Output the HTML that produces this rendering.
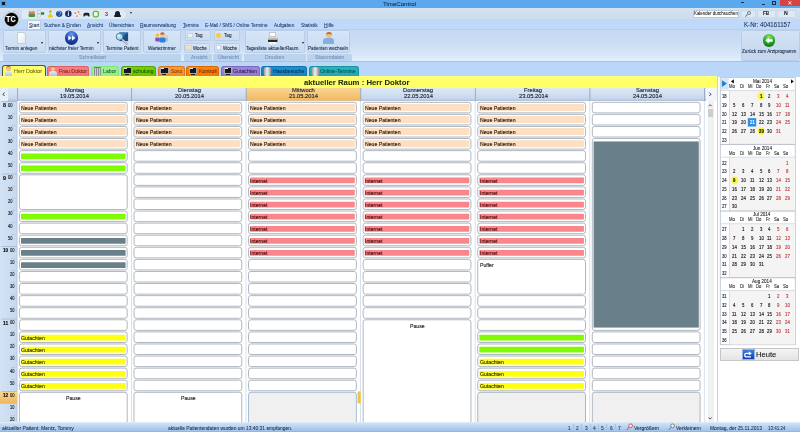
<!DOCTYPE html><html><head><meta charset="utf-8"><title>TimeControl</title><style>
*{box-sizing:border-box;margin:0;padding:0}
html,body{width:800px;height:432px;overflow:hidden;background:#fff}
body{font-family:"Liberation Sans",sans-serif;font-size:6px;color:#1a1a1a;position:relative}
#w{position:absolute;left:0;top:0;width:800px;height:432px;overflow:hidden;will-change:transform}
.a{position:absolute}
u{text-decoration-thickness:0.4px;text-underline-offset:0.2px;text-decoration-color:rgba(29,58,102,.6)}
.t{position:absolute;white-space:nowrap;line-height:1;-webkit-text-stroke:0.07px currentColor}
.g{-webkit-text-stroke:0.14px currentColor}
/* title */
#title{left:0;top:0;width:800px;height:8px;background:#5aa8ee}
/* ribbon */
#rib{left:0;top:8px;width:800px;height:69px;background:#bad7fa}
#ribtop{left:0;top:8px;width:800px;height:11px;background:linear-gradient(#d4e2f1,#cddded)}
.rb{position:absolute;background:linear-gradient(#d6e5f7,#c9dcf3);border:1px solid #bacde6;border-radius:1.5px}
.gl{position:absolute;height:7px;background:#bcd3ee;color:#6f8fb8;font-size:5.5px;text-align:center;line-height:7px;border-radius:1px}
.bt{position:absolute;font-size:5.2px;white-space:nowrap;text-align:center;color:#15253a;line-height:1}
.mt{position:absolute;top:21.5px;font-size:5.6px;color:#1d3a66;white-space:nowrap;line-height:1}
/* room tabs */
.rt{position:absolute;top:66px;height:10.5px;border-radius:3px 3px 0 0;font-size:5.6px;line-height:12px;white-space:nowrap;color:#1a2a1a;border:1px solid rgba(90,90,90,.35);border-bottom:none}
#banner{left:0;top:76px;width:717px;height:12px;background:linear-gradient(#ffff9c 0,#ffff68 14%,#ffff66)}
/* day header */
.dh{position:absolute;top:88px;height:14px;background:linear-gradient(#d9e6f5,#c3d6ec);border-right:1px solid #9fb3cc;text-align:center;font-size:6.2px;line-height:6px;color:#1a1a1a;padding-top:1px}
.dh.cur{background:linear-gradient(#f9d48c,#f3b95a)}
/* grid */
#timecol{left:0;top:102px;width:17px;height:319px;background:#c9dbef;border-right:1px solid #a9bfd9}
.c{position:absolute;background:#fff;border:1px solid #a7b2ba;border-radius:2.5px;padding:1px}
.c>i{display:block;width:100%;height:100%;border-radius:1px;font-style:normal;font-size:5.2px;line-height:8px;padding-left:1px;white-space:nowrap;overflow:hidden;color:#222}
.np>i{background:#fcdfc6}
.gr>i{background:#7ff20a}
.in>i{background:#f5838a;color:#5a1010}
.gy>i{background:#6a818b}
.gu>i{background:#ffff14;color:#3a3a00}
.ev{background:#f0f0f0}
.vl{position:absolute;top:102px;width:1px;height:319px;background:#d5dfea}
.hr{position:absolute;font-weight:bold;font-size:6px;color:#111;line-height:1}
.mn{position:absolute;font-size:4.6px;color:#333;line-height:1}
/* status */
#status{left:0;top:422px;width:800px;height:10px;background:linear-gradient(#e9f1fa 0,#d0e1f5 12%,#b2cef0 60%,#9fc2ec 92%,#7fa6d8 100%)}
.st{position:absolute;top:423.5px;font-size:5.4px;color:#1a2b44;white-space:nowrap;line-height:1}
/* right panel */
#rp{left:717px;top:77px;width:83px;height:345px;background:#fff;border-left:1px solid #c8d0d8}
.cal{position:absolute;font-size:5.6px;line-height:1;white-space:nowrap;text-align:center;color:#111}
.red{color:#c02a2a}
</style></head><body><div id="w">
<div class="a" id="title"></div>
<div class="t" style="left:383.00px;top:2.00px;font-size:5.80px;transform-origin:0 0;transform:scaleX(1.052);color:#16283e;">TimeControl</div>
<div class="a" style="left:1.2px;top:1.3px;width:4.6px;height:4.6px;border-radius:50%;background:radial-gradient(circle closest-side,#111 0,#111 55%,#93a0ae 78%,#4a5a6c 100%)"></div>
<div class="a" style="left:780px;top:0;width:20px;height:6px;background:#d8423f"></div>
<svg class="a" style="left:780px;top:0" width="20" height="6" viewBox="0 0 20 6"><path d="M8.4 1.3 L11.2 4.5 M11.2 1.3 L8.4 4.5" stroke="#fff" stroke-width="0.9"/></svg>
<div class="a" style="left:762px;top:3.6px;width:3px;height:1px;background:#1b2f4a"></div>
<div class="a" style="left:772.4px;top:1px;width:3.6px;height:3.6px;border:0.9px solid #1b2f4a"></div>
<div class="a" style="left:740.5px;top:2.2px;width:3.6px;height:1.1px;background:#1b2f4a"></div>
<div class="a" id="rib"></div>
<div class="a" id="ribtop"></div>
<div class="a" style="left:22px;top:9.5px;width:104px;height:9.5px;background:#deeaf8;border-radius:0 4.5px 4.5px 0"></div>
<svg class="a" style="left:26px;top:9px" width="76" height="10" viewBox="26 9 76 10"><rect x="28.6" y="13.4" width="6.4" height="3.6" rx="1" fill="#3f9c32"/><circle cx="30.3" cy="12.3" r="1.55" fill="#e8806e"/><circle cx="33.4" cy="12.3" r="1.55" fill="#e8806e"/><rect x="28.9" y="13.2" width="5.8" height="1.1" fill="#d9695a"/><rect x="37.2" y="10.8" width="3" height="2.6" fill="#e9eef4" stroke="#9fb0c2" stroke-width="0.5"/><rect x="41" y="12.3" width="3.2" height="2.4" fill="#2c7e3c"/><rect x="37.6" y="14.5" width="3" height="2.6" fill="#eef2f6" stroke="#a9b8c8" stroke-width="0.5"/><circle cx="50.4" cy="11.6" r="1.15" fill="#b89a10"/><path d="M50.3 12.4 L52.9 17.2 L47.6 17.2 Z" fill="#e8d022"/><rect x="48" y="15.6" width="4.8" height="1.6" rx="0.6" fill="#e8d022"/><circle cx="59.2" cy="13.8" r="3.15" fill="#1f4f92"/><path d="M57.4 12.2 q1.8 -1.6 3.4 0 q0.6 1.2 -1.4 2" stroke="#9fc4ea" stroke-width="0.9" fill="none"/><circle cx="59.3" cy="15.7" r="0.5" fill="#9fc4ea"/><circle cx="68.35" cy="13.8" r="3.25" fill="#102c72"/><rect x="67.85" y="13.2" width="1.1" height="2.6" fill="#fff"/><circle cx="68.4" cy="12" r="0.65" fill="#fff"/><circle cx="77.4" cy="13.8" r="2.2" fill="none" stroke="#fbf3ee" stroke-width="1.7"/><circle cx="77.4" cy="13.8" r="2.2" fill="none" stroke="#e8845e" stroke-width="1.7" stroke-dasharray="1.73 1.73" stroke-dashoffset="0.86"/><path d="M83.6 16.6 q-0.8 -3.6 1.4 -3.9 h3 q2.2 0.3 1.4 3.9 q-0.9 0.6 -1.6 -1 h-2.6 q-0.7 1.6 -1.6 1 Z" fill="#26262c"/><rect x="93.2" y="11.3" width="5.2" height="5.6" rx="1.8" fill="#eef7e6" stroke="#62b830" stroke-width="1.3"/></svg>
<div class="t" style="left:105.00px;top:11.00px;font-size:6.20px;transform-origin:0 0;transform:scaleX(0.870);font-weight:bold;color:#d41c1c;">3</div>
<div class="a" style="left:114.8px;top:10.6px;width:5.6px;height:5.4px;border-radius:2.8px 2.8px 0.5px 0.5px;background:#1c1c1c"></div>
<div class="a" style="left:114px;top:15.4px;width:7.2px;height:1.5px;background:#1c1c1c;border-radius:1px"></div>
<div class="a" style="left:129.6px;top:12.4px;width:0;height:0;border-left:1.3px solid transparent;border-right:1.3px solid transparent;border-top:2px solid #222"></div>
<div class="a" style="left:0;top:18.5px;width:800px;height:10.5px;background:#bed9fa"></div>
<div class="a" style="left:26.5px;top:19.5px;width:14px;height:10.5px;background:#f4f8fd;border:1px solid #b9cde6;border-bottom:none;border-radius:1.5px 1.5px 0 0"></div>
<div class="t" style="left:28.50px;top:23.00px;font-size:5.50px;transform-origin:0 0;transform:scaleX(0.904);color:#1d3a66;"><u>S</u>tart</div>
<div class="t" style="left:44.00px;top:23.00px;font-size:5.50px;transform-origin:0 0;transform:scaleX(0.877);color:#1d3a66;">Suchen &amp; <u>F</u>inden</div>
<div class="t" style="left:87.00px;top:23.00px;font-size:5.50px;transform-origin:0 0;transform:scaleX(0.887);color:#1d3a66;"><u>A</u>nsicht</div>
<div class="t" style="left:108.50px;top:23.00px;font-size:5.50px;transform-origin:0 0;transform:scaleX(0.852);color:#1d3a66;">&Uuml;bersichten</div>
<div class="t" style="left:140.00px;top:23.00px;font-size:5.50px;transform-origin:0 0;transform:scaleX(0.872);color:#1d3a66;"><u>R</u>aumverwaltung</div>
<div class="t" style="left:182.50px;top:23.00px;font-size:5.50px;transform-origin:0 0;transform:scaleX(0.818);color:#1d3a66;"><u>T</u>ermine</div>
<div class="t" style="left:205.00px;top:23.00px;font-size:5.50px;transform-origin:0 0;transform:scaleX(0.850);color:#1d3a66;">E-Mail / SMS / Online Termine</div>
<div class="t" style="left:274.30px;top:23.00px;font-size:5.50px;transform-origin:0 0;transform:scaleX(0.866);color:#1d3a66;">Aufgaben</div>
<div class="t" style="left:301.30px;top:23.00px;font-size:5.50px;transform-origin:0 0;transform:scaleX(0.857);color:#1d3a66;">Statistik</div>
<div class="t" style="left:324.00px;top:23.00px;font-size:5.50px;transform-origin:0 0;transform:scaleX(0.891);color:#1d3a66;"><u>H</u>ilfe</div>
<div class="a" style="left:0;top:28.5px;width:800px;height:33px;background:linear-gradient(#a9c2ea 0,#c5d9f3 3%,#cadcf4 40%,#d5e6f8 75%,#e1effc 95%,#e1effc 96.5%,#a3c2ea 98.5%)"></div>
<div class="rb" style="left:3.0px;top:30.0px;width:42.5px;height:22.5px"></div>
<div class="t" style="left:5.00px;top:46.00px;font-size:5.30px;transform-origin:0 0;transform:scaleX(0.897);color:#15253a;">Termin anlegen</div>
<div class="rb" style="left:48.0px;top:30.0px;width:53.0px;height:22.5px"></div>
<div class="t" style="left:49.00px;top:46.00px;font-size:5.30px;transform-origin:0 0;transform:scaleX(0.870);color:#15253a;">n&auml;chster freier Termin</div>
<div class="rb" style="left:103.0px;top:30.0px;width:38.0px;height:22.5px"></div>
<div class="t" style="left:105.50px;top:46.00px;font-size:5.30px;transform-origin:0 0;transform:scaleX(0.883);color:#15253a;">Termine Patient</div>
<div class="rb" style="left:143.0px;top:30.0px;width:37.5px;height:22.5px"></div>
<div class="t" style="left:147.70px;top:46.00px;font-size:5.30px;transform-origin:0 0;transform:scaleX(0.888);color:#15253a;">Wartezimmer</div>
<div class="gl" style="left:3.0px;top:53.8px;width:177.5px"></div><div class="t" style="left:79.00px;top:55.00px;font-size:5.40px;transform-origin:0 0;transform:scaleX(0.957);color:#6f8fb8;">Schnellstart</div>
<div class="a" style="left:17px;top:31.6px;width:9.4px;height:12.6px;background:linear-gradient(135deg,#fff,#e6eaf0);border:0.8px solid #c4ccd6;border-radius:0.5px 3px 0.5px 0.5px"></div>
<div class="a" style="left:65px;top:31.3px;width:13.4px;height:13.4px;border-radius:50%;background:radial-gradient(circle at 50% 25%,#6a9cf0,#1a3fa8 55%,#0a2070)"></div>
<svg class="a" style="left:67.6px;top:35.2px" width="8" height="6" viewBox="0 0 8 6"><path d="M0.3 0.4 L3.6 3 L0.3 5.6Z M4 0.4 L7.4 3 L4 5.6Z" fill="#fff"/></svg>
<svg class="a" style="left:112px;top:30px" width="60" height="16" viewBox="112 30 60 16"><rect x="119.5" y="32.5" width="8.6" height="8.6" fill="#1c4c84"/><path d="M119.5 32.5 h8.6 l-8.6 6Z" fill="#2f7fc0"/><path d="M122.2 39.4 L127.4 44.2" stroke="#7d8791" stroke-width="2"/><path d="M122.2 39.4 L127.4 44.2" stroke="#dfe3e8" stroke-width="1.1"/><circle cx="119.6" cy="36.7" r="3.4" fill="#a9dcf0" stroke="#3d6e94" stroke-width="0.9"/><circle cx="118.6" cy="35.7" r="1.3" fill="#e6f6fc"/><rect x="165.4" y="37.4" width="2.6" height="4.2" rx="0.8" fill="#9cc4ec"/><circle cx="166.6" cy="36" r="1.3" fill="#e8c8a0"/><rect x="155.3" y="37.6" width="4.4" height="4" rx="1" fill="#8152ba"/><circle cx="157.4" cy="35.6" r="1.8" fill="#f0c890"/><path d="M155.6 35.4 a1.8 1.8 0 0 1 3.6 0 Z" fill="#e6c020"/><rect x="159.4" y="37.6" width="6.2" height="5" rx="1.4" fill="#2f80d2"/><circle cx="162.4" cy="34.8" r="2.2" fill="#f2c08c"/><path d="M160.2 34.4 a2.2 2.2 0 0 1 4.4 0 Z" fill="#c2661a"/></svg>
<div class="rb" style="left:185.0px;top:30.0px;width:25.5px;height:10.8px"></div>
<div class="rb" style="left:183.8px;top:42.8px;width:26.7px;height:10.2px"></div>
<div class="a" style="left:187px;top:33.2px;width:5.5px;height:4.8px;background:#eef0ee;border:0.6px solid #cfd4da"></div>
<div class="a" style="left:184.8px;top:45.2px;width:7px;height:4.8px;background:#f1e4c4;border:0.6px solid #cfd4da"></div>
<div class="t" style="left:194.50px;top:33.00px;font-size:5.40px;transform-origin:0 0;transform:scaleX(0.861);">Tag</div>
<div class="t" style="left:193.20px;top:46.00px;font-size:5.40px;transform-origin:0 0;transform:scaleX(0.826);">Woche</div>
<div class="gl" style="left:183.5px;top:53.8px;width:28.5px"></div><div class="t" style="left:190.50px;top:55.00px;font-size:5.40px;transform-origin:0 0;transform:scaleX(0.932);color:#6f8fb8;">Ansicht</div>
<div class="rb" style="left:213.8px;top:30.0px;width:26.2px;height:10.8px"></div>
<div class="rb" style="left:213.8px;top:42.8px;width:26.2px;height:10.2px"></div>
<div class="a" style="left:215.5px;top:33px;width:5.6px;height:5px;background:#f8cc40;border-radius:2px"></div>
<div class="a" style="left:215.5px;top:45px;width:5.6px;height:5.2px;background:#fdfdfd;border:0.6px solid #cfd4da"></div>
<div class="t" style="left:223.50px;top:33.00px;font-size:5.40px;transform-origin:0 0;transform:scaleX(0.861);">Tag</div>
<div class="t" style="left:223.00px;top:46.00px;font-size:5.40px;transform-origin:0 0;transform:scaleX(0.838);">Woche</div>
<div class="gl" style="left:213.0px;top:53.8px;width:28.5px"></div><div class="t" style="left:218.00px;top:55.00px;font-size:5.40px;transform-origin:0 0;transform:scaleX(0.921);color:#6f8fb8;">&Uuml;bersicht</div>
<div class="rb" style="left:245.0px;top:30.0px;width:60.0px;height:22.5px"></div>
<div class="t" style="left:246.00px;top:46.00px;font-size:5.30px;transform-origin:0 0;transform:scaleX(0.887);color:#15253a;">Tagesliste aktuellerRaum</div>
<div class="a" style="left:269.2px;top:32.2px;width:7.2px;height:5px;background:#fdfdfd;border:0.6px solid #c8c8c8"></div>
<div class="a" style="left:267.8px;top:36.6px;width:10px;height:5.4px;background:linear-gradient(#e2e2e2,#6a6a6a);border-radius:1px"></div>
<div class="a" style="left:268.4px;top:40.2px;width:8.8px;height:2.2px;background:#2a2a2a"></div>
<div class="a" style="left:269.4px;top:42px;width:6.8px;height:2px;background:#f8f8f8"></div>
<div class="gl" style="left:243.5px;top:53.8px;width:62.0px"></div><div class="t" style="left:265.30px;top:55.00px;font-size:5.40px;transform-origin:0 0;transform:scaleX(0.965);color:#6f8fb8;">Drucken</div>
<div class="rb" style="left:307.0px;top:30.0px;width:43.0px;height:22.5px"></div>
<div class="t" style="left:308.00px;top:46.00px;font-size:5.30px;transform-origin:0 0;transform:scaleX(0.875);color:#15253a;">Patienten wechseln</div>
<div class="a" style="left:325.6px;top:31.8px;width:6px;height:6.2px;border-radius:50%;background:#f2bc88;border-top:2.2px solid #b87420"></div>
<div class="a" style="left:323.2px;top:37.8px;width:10.6px;height:6px;border-radius:3px 3px 0.5px 0.5px;background:#86aee0"></div>
<div class="gl" style="left:307.0px;top:53.8px;width:44.5px"></div><div class="t" style="left:314.50px;top:55.00px;font-size:5.40px;transform-origin:0 0;transform:scaleX(0.964);color:#6f8fb8;">Stammdaten</div>
<div class="a" style="left:41.2px;top:41.6px;width:0;height:0;border-left:1.4px solid transparent;border-right:1.4px solid transparent;border-top:2px solid #1a1a1a"></div>
<div class="a" style="left:96.9px;top:41.6px;width:0;height:0;border-left:1.4px solid transparent;border-right:1.4px solid transparent;border-top:2px solid #1a1a1a"></div>
<div class="a" style="left:301.6px;top:41.6px;width:0;height:0;border-left:1.4px solid transparent;border-right:1.4px solid transparent;border-top:2px solid #1a1a1a"></div>
<div class="a" style="left:3.3px;top:10.9px;width:16.8px;height:16.8px;border-radius:50%;background:radial-gradient(circle closest-side at 50% 50%,#222 0,#060606 55%,#000 72%,#59626c 77%,#d9dfe6 88%,#f0f3f6 93%,#9aa5b0 100%)"></div>
<div class="t" style="left:6.40px;top:15.00px;font-size:8.60px;transform-origin:0 0;transform:scaleX(0.855);font-weight:bold;color:#fff;">TC</div>
<div class="a" style="left:692.5px;top:10px;width:46.5px;height:7.5px;background:#fff;border:1px solid #bccbdc"></div>
<div class="t" style="left:693.60px;top:11.50px;font-size:4.90px;transform-origin:0 0;transform:scaleX(0.897);color:#222;">Kalender durchsuchen</div>
<div class="a" style="left:741px;top:10px;width:14.5px;height:7.5px;background:#dee9f5;border:1px solid #cbd9ea"></div>
<div class="a" style="left:747.2px;top:10.8px;width:4.2px;height:4.2px;border-radius:50%;border:0.8px solid #6a7a8c;background:#f4f8fc"></div>
<div class="a" style="left:744.8px;top:15px;width:3px;height:0.9px;background:#6a7a8c;transform:rotate(-45deg)"></div>
<div class="a" style="left:757px;top:10px;width:18.5px;height:7.5px;background:#dee9f5;border:1px solid #cbd9ea"></div>
<div class="t" style="left:762.60px;top:11.10px;font-size:5.40px;transform-origin:0 0;transform:scaleX(0.861);font-weight:bold;color:#222;">FB</div>
<div class="a" style="left:777px;top:10px;width:19px;height:7.5px;background:#dee9f5;border:1px solid #cbd9ea"></div>
<div class="t" style="left:784.30px;top:11.10px;font-size:5.40px;transform-origin:0 0;transform:scaleX(0.974);font-weight:bold;color:#222;">N</div>
<div class="t" style="left:743.50px;top:21.50px;font-size:6.40px;transform-origin:0 0;transform:scaleX(0.963);color:#1c2c44;">K-Nr: 404161157</div>
<div class="rb" style="left:740.5px;top:29.5px;width:59.5px;height:31px;background:linear-gradient(#d3e2f4,#c3d6ee)"></div>
<div class="a" style="left:762.5px;top:34.2px;width:12.6px;height:12.6px;border-radius:50%;background:radial-gradient(circle at 50% 25%,#8ae868,#1c9a1c 58%,#0a5a0e)"></div>
<svg class="a" style="left:764.6px;top:37px" width="8" height="7" viewBox="0 0 8 7"><path d="M0.3 3.5 L3.8 0.4 L3.8 2.3 L7.6 2.3 L7.6 4.7 L3.8 4.7 L3.8 6.6Z" fill="#fff"/></svg>
<div class="t" style="left:741.50px;top:49.80px;font-size:4.90px;transform-origin:0 0;transform:scaleX(0.944);color:#15253a;">Zur&uuml;ck zum Arztprogramm</div>
<div class="a" style="left:0;top:61.5px;width:800px;height:15.5px;background:#bad7fa"></div>
<div class="rt" style="left:2.0px;width:43.5px;background:linear-gradient(#ffff66,#caca46);border-color:#8a8a20;border:1.3px solid #55552a;border-bottom:none;top:65.2px;height:11.3px;background:#ffff68;"></div>
<div class="t" style="left:14.00px;top:69.00px;font-size:5.50px;transform-origin:0 0;transform:scaleX(0.985);color:#6c6c18;">Herr Doktor</div>
<div class="a" style="left:6.3px;top:66.4px;width:4.4px;height:4.6px;border-radius:50%;background:#f2c08a;border-top:1.6px solid #a86420"></div>
<div class="a" style="left:4.7px;top:70.8px;width:7.6px;height:5.4px;border-radius:3px 3px 0 0;background:linear-gradient(#e4eaf4,#b4c4e0)"></div>
<div class="rt" style="left:46.5px;width:42.5px;background:linear-gradient(#f67f80,#e87374);border-color:#d86466;"></div>
<div class="t" style="left:58.50px;top:69.00px;font-size:5.50px;transform-origin:0 0;transform:scaleX(0.964);color:#8a1c1c;">Frau Doktor</div>
<div class="a" style="left:50.8px;top:66.4px;width:4.4px;height:4.6px;border-radius:50%;background:#f2c08a;border-top:1.6px solid #a86420"></div>
<div class="a" style="left:49.2px;top:70.8px;width:7.6px;height:5.4px;border-radius:3px 3px 0 0;background:linear-gradient(#e4eaf4,#b4c4e0)"></div>
<div class="rt" style="left:91.0px;width:27.5px;background:linear-gradient(#9cf094,#92eb8a);border-color:#86e47e;"></div>
<div class="t" style="left:103.00px;top:69.00px;font-size:5.50px;transform-origin:0 0;transform:scaleX(0.945);color:#1c6a1c;">Labor</div>
<div class="a" style="left:94.0px;top:67.2px;width:7px;height:8.6px;border-radius:1px 1px 2px 2px;background:repeating-linear-gradient(90deg,#8a8f94 0 1px,#c9cdd1 1px 2px);border-top:1.6px solid #6f757b"></div>
<div class="rt" style="left:120.5px;width:35.5px;background:linear-gradient(#70d200,#65bf00);border-color:#58a800;"></div>
<div class="t" style="left:133.00px;top:69.00px;font-size:5.50px;transform-origin:0 0;transform:scaleX(0.931);color:#1f4a00;">schulung</div>
<div class="a" style="left:123.1px;top:67px;width:8.6px;height:6.6px;background:#14181c;border:0.8px solid #a6aab0"></div>
<div class="a" style="left:124.3px;top:68.2px;width:3px;height:1px;background:#e8e8e8"></div>
<div class="a" style="left:125.1px;top:73.6px;width:4.4px;height:1.6px;background:#1e2226"></div>
<div class="rt" style="left:157.5px;width:27.0px;background:linear-gradient(#ff9a35,#ed8c28);border-color:#d87a18;"></div>
<div class="t" style="left:170.50px;top:69.00px;font-size:5.50px;transform-origin:0 0;transform:scaleX(0.856);color:#8a3a00;">Sono</div>
<div class="a" style="left:160.1px;top:67px;width:8.6px;height:6.6px;background:#14181c;border:0.8px solid #a6aab0"></div>
<div class="a" style="left:161.3px;top:68.2px;width:3px;height:1px;background:#e8e8e8"></div>
<div class="a" style="left:162.1px;top:73.6px;width:4.4px;height:1.6px;background:#1e2226"></div>
<div class="rt" style="left:186.0px;width:32.5px;background:linear-gradient(#ff8408,#ed7804);border-color:#d86a00;"></div>
<div class="t" style="left:198.50px;top:69.00px;font-size:5.50px;transform-origin:0 0;transform:scaleX(0.954);color:#7a2800;">Kontroll</div>
<div class="a" style="left:188.6px;top:67px;width:8.6px;height:6.6px;background:#14181c;border:0.8px solid #a6aab0"></div>
<div class="a" style="left:189.8px;top:68.2px;width:3px;height:1px;background:#e8e8e8"></div>
<div class="a" style="left:190.6px;top:73.6px;width:4.4px;height:1.6px;background:#1e2226"></div>
<div class="rt" style="left:221.0px;width:38.5px;background:linear-gradient(#9d86d4,#9078c7);border-color:#7f68b8;"></div>
<div class="t" style="left:232.80px;top:69.00px;font-size:5.50px;transform-origin:0 0;transform:scaleX(0.946);color:#2c1a68;">Gutachten</div>
<div class="a" style="left:223.6px;top:67px;width:8.6px;height:6.6px;background:#14181c;border:0.8px solid #a6aab0"></div>
<div class="a" style="left:224.8px;top:68.2px;width:3px;height:1px;background:#e8e8e8"></div>
<div class="a" style="left:225.6px;top:73.6px;width:4.4px;height:1.6px;background:#1e2226"></div>
<div class="rt" style="left:260.8px;width:46.5px;background:linear-gradient(#1b8ed2,#1781c1);border-color:#1272ac;"></div>
<div class="t" style="left:272.80px;top:69.00px;font-size:5.50px;transform-origin:0 0;transform:scaleX(0.931);color:#08304e;">Hausbesuche</div>
<div class="a" style="left:263.8px;top:66.6px;width:7.4px;height:9.4px;border-radius:3.7px/1.6px;background:linear-gradient(90deg,#9aa0a6,#eceef0 45%,#8d9399)"></div>
<div class="rt" style="left:308.6px;width:50.2px;background:linear-gradient(#27b4bc,#21a5ad);border-color:#1a929a;"></div>
<div class="t" style="left:320.40px;top:69.00px;font-size:5.50px;transform-origin:0 0;transform:scaleX(0.957);color:#0a4a50;">Online-Termine</div>
<div class="a" style="left:311.6px;top:66.6px;width:7.4px;height:9.4px;border-radius:3.7px/1.6px;background:linear-gradient(90deg,#9aa0a6,#eceef0 45%,#8d9399)"></div>
<div class="a" id="banner"></div>
<div class="t" style="left:304.00px;top:79.00px;font-size:7.80px;transform-origin:0 0;transform:scaleX(0.993);font-weight:bold;color:#1c2a0c;">aktueller Raum : Herr Doktor</div>
<div class="a" style="left:0;top:87.5px;width:717px;height:13.2px;background:linear-gradient(#dfe9f6,#c6d7ec 82%,#aebfd6)"></div>
<div class="a" style="left:0;top:87.5px;width:7.7px;height:13.2px;background:#e6eef8"></div>
<svg class="a" style="left:0;top:88px" width="717" height="14" viewBox="0 88 717 14">
<rect x="246.16" y="87.5" width="114.58" height="13.1" fill="url(#og)"/>
<defs><linearGradient id="og" x1="0" y1="0" x2="0" y2="1"><stop offset="0" stop-color="#f9d694"/><stop offset="1" stop-color="#f2b85e"/></linearGradient></defs>
<rect x="17.05" y="88" width="0.9" height="12.6" fill="#93a7c2"/>
<rect x="131.13" y="88" width="0.9" height="12.6" fill="#93a7c2"/>
<rect x="245.71" y="88" width="0.9" height="12.6" fill="#93a7c2"/>
<rect x="360.29" y="88" width="0.9" height="12.6" fill="#93a7c2"/>
<rect x="474.87" y="88" width="0.9" height="12.6" fill="#93a7c2"/>
<rect x="589.45" y="88" width="0.9" height="12.6" fill="#93a7c2"/>
<rect x="704.03" y="88" width="0.9" height="12.6" fill="#93a7c2"/>
<path d="M4.5 92.6 L3 94.3 L4.5 96" stroke="#222" stroke-width="0.9" fill="none"/>
<path d="M709.4 92.3 L710.9 94 L709.4 95.7" stroke="#222" stroke-width="0.9" fill="none"/>
</svg>
<div class="t g" style="left:65.03px;top:88.00px;font-size:5.60px;transform-origin:0 0;transform:scaleX(1.035);color:#1c2430;">Montag</div>
<div class="t g" style="left:60.19px;top:94.00px;font-size:5.60px;transform-origin:0 0;transform:scaleX(1.035);color:#1c2430;">19.05.2014</div>
<div class="t g" style="left:177.84px;top:88.00px;font-size:5.60px;transform-origin:0 0;transform:scaleX(1.035);color:#1c2430;">Dienstag</div>
<div class="t g" style="left:174.77px;top:94.00px;font-size:5.60px;transform-origin:0 0;transform:scaleX(1.035);color:#1c2430;">20.05.2014</div>
<div class="t g" style="left:292.42px;top:88.00px;font-size:5.60px;transform-origin:0 0;transform:scaleX(1.035);color:#1c2430;">Mittwoch</div>
<div class="t g" style="left:289.35px;top:94.00px;font-size:5.60px;transform-origin:0 0;transform:scaleX(1.035);color:#1c2430;">21.05.2014</div>
<div class="t g" style="left:403.45px;top:88.00px;font-size:5.60px;transform-origin:0 0;transform:scaleX(1.035);color:#1c2430;">Donnerstag</div>
<div class="t g" style="left:403.93px;top:94.00px;font-size:5.60px;transform-origin:0 0;transform:scaleX(1.035);color:#1c2430;">22.05.2014</div>
<div class="t g" style="left:523.99px;top:88.00px;font-size:5.60px;transform-origin:0 0;transform:scaleX(1.035);color:#1c2430;">Freitag</div>
<div class="t g" style="left:518.51px;top:94.00px;font-size:5.60px;transform-origin:0 0;transform:scaleX(1.035);color:#1c2430;">23.05.2014</div>
<div class="t g" style="left:636.16px;top:88.00px;font-size:5.60px;transform-origin:0 0;transform:scaleX(1.035);color:#1c2430;">Samstag</div>
<div class="t g" style="left:633.09px;top:94.00px;font-size:5.60px;transform-origin:0 0;transform:scaleX(1.035);color:#1c2430;">24.05.2014</div>
<div class="a" style="left:0;top:101px;width:17px;height:322px;background:linear-gradient(90deg,#d2e2f4,#c6d9ef)"></div>
<div class="a" style="left:705.5px;top:87.5px;width:12px;height:13.2px;background:#f2f6fb"></div>
<svg class="a" style="left:705px;top:88px" width="12" height="13" viewBox="705 88 12 13"><path d="M709.4 92.6 L710.9 94.3 L709.4 96" stroke="#222" stroke-width="0.9" fill="none"/></svg>
<svg class="a" style="left:0;top:101px" width="717" height="322" viewBox="0 101 717 322">
<rect x="130.98" y="101" width="0.9" height="322" fill="#d3dde8"/>
<rect x="245.56" y="101" width="0.9" height="322" fill="#d3dde8"/>
<rect x="360.14" y="101" width="0.9" height="322" fill="#d3dde8"/>
<rect x="474.72" y="101" width="0.9" height="322" fill="#d3dde8"/>
<rect x="589.30" y="101" width="0.9" height="322" fill="#d3dde8"/>
<rect x="703.88" y="101" width="0.9" height="322" fill="#d3dde8"/>
<rect x="16.6" y="101" width="0.9" height="322" fill="#b3c6dd"/>
<rect x="1.5" y="101.10" width="15" height="0.9" fill="#a9bdd6"/>
<rect x="11.3" y="113.28" width="3.8" height="0.8" fill="#adc2db"/>
<rect x="11.3" y="125.37" width="3.8" height="0.8" fill="#adc2db"/>
<rect x="11.3" y="137.45" width="3.8" height="0.8" fill="#adc2db"/>
<rect x="11.3" y="149.53" width="3.8" height="0.8" fill="#adc2db"/>
<rect x="11.3" y="161.62" width="3.8" height="0.8" fill="#adc2db"/>
<rect x="1.5" y="173.60" width="15" height="0.9" fill="#a9bdd6"/>
<rect x="11.3" y="185.78" width="3.8" height="0.8" fill="#adc2db"/>
<rect x="11.3" y="197.86" width="3.8" height="0.8" fill="#adc2db"/>
<rect x="11.3" y="209.95" width="3.8" height="0.8" fill="#adc2db"/>
<rect x="11.3" y="222.03" width="3.8" height="0.8" fill="#adc2db"/>
<rect x="11.3" y="234.11" width="3.8" height="0.8" fill="#adc2db"/>
<rect x="1.5" y="246.10" width="15" height="0.9" fill="#a9bdd6"/>
<rect x="11.3" y="258.28" width="3.8" height="0.8" fill="#adc2db"/>
<rect x="11.3" y="270.36" width="3.8" height="0.8" fill="#adc2db"/>
<rect x="11.3" y="282.44" width="3.8" height="0.8" fill="#adc2db"/>
<rect x="11.3" y="294.53" width="3.8" height="0.8" fill="#adc2db"/>
<rect x="11.3" y="306.61" width="3.8" height="0.8" fill="#adc2db"/>
<rect x="1.5" y="318.59" width="15" height="0.9" fill="#a9bdd6"/>
<rect x="11.3" y="330.78" width="3.8" height="0.8" fill="#adc2db"/>
<rect x="11.3" y="342.86" width="3.8" height="0.8" fill="#adc2db"/>
<rect x="11.3" y="354.94" width="3.8" height="0.8" fill="#adc2db"/>
<rect x="11.3" y="367.03" width="3.8" height="0.8" fill="#adc2db"/>
<rect x="11.3" y="379.11" width="3.8" height="0.8" fill="#adc2db"/>
<rect x="0" y="391.59" width="17" height="12.1" fill="url(#og2)"/>
<rect x="1.5" y="391.09" width="15" height="0.9" fill="#a9bdd6"/>
<rect x="11.3" y="403.27" width="3.8" height="0.8" fill="#adc2db"/>
<rect x="11.3" y="415.36" width="3.8" height="0.8" fill="#adc2db"/>
<defs><linearGradient id="og2" x1="0" y1="0" x2="0" y2="1"><stop offset="0" stop-color="#f9d595"/><stop offset="1" stop-color="#f0b55a"/></linearGradient></defs>
<rect x="19.40" y="102.30" width="107.80" height="10.58" rx="2.3" fill="#fff" stroke="#aeb7c0" stroke-width="1"/>
<rect x="20.80" y="103.90" width="104.90" height="7.00" rx="0.6" fill="#fddfc4"/>
<rect x="19.40" y="114.38" width="107.80" height="10.58" rx="2.3" fill="#fff" stroke="#aeb7c0" stroke-width="1"/>
<rect x="20.80" y="115.98" width="104.90" height="7.00" rx="0.6" fill="#fddfc4"/>
<rect x="19.40" y="126.47" width="107.80" height="10.58" rx="2.3" fill="#fff" stroke="#aeb7c0" stroke-width="1"/>
<rect x="20.80" y="128.07" width="104.90" height="7.00" rx="0.6" fill="#fddfc4"/>
<rect x="19.40" y="138.55" width="107.80" height="10.58" rx="2.3" fill="#fff" stroke="#aeb7c0" stroke-width="1"/>
<rect x="20.80" y="140.15" width="104.90" height="7.00" rx="0.6" fill="#fddfc4"/>
<rect x="19.40" y="150.63" width="107.80" height="10.58" rx="2.3" fill="#fff" stroke="#aeb7c0" stroke-width="1"/>
<rect x="21.00" y="153.38" width="104.60" height="5.75" rx="0.6" fill="#80fa05"/>
<rect x="19.40" y="162.72" width="107.80" height="10.58" rx="2.3" fill="#fff" stroke="#aeb7c0" stroke-width="1"/>
<rect x="21.00" y="165.47" width="104.60" height="5.75" rx="0.6" fill="#80fa05"/>
<rect x="19.40" y="174.80" width="107.80" height="34.75" rx="2.3" fill="#fff" stroke="#aeb7c0" stroke-width="1"/>
<rect x="19.40" y="211.05" width="107.80" height="10.58" rx="2.3" fill="#fff" stroke="#aeb7c0" stroke-width="1"/>
<rect x="21.00" y="213.80" width="104.60" height="5.75" rx="0.6" fill="#80fa05"/>
<rect x="19.40" y="223.13" width="107.80" height="10.58" rx="2.3" fill="#fff" stroke="#aeb7c0" stroke-width="1"/>
<rect x="19.40" y="235.21" width="107.80" height="10.58" rx="2.3" fill="#fff" stroke="#aeb7c0" stroke-width="1"/>
<rect x="21.00" y="237.96" width="104.60" height="5.75" rx="0.6" fill="#69808a"/>
<rect x="19.40" y="247.30" width="107.80" height="10.58" rx="2.3" fill="#fff" stroke="#aeb7c0" stroke-width="1"/>
<rect x="21.00" y="250.05" width="104.60" height="5.75" rx="0.6" fill="#69808a"/>
<rect x="19.40" y="259.38" width="107.80" height="10.58" rx="2.3" fill="#fff" stroke="#aeb7c0" stroke-width="1"/>
<rect x="21.00" y="262.13" width="104.60" height="5.75" rx="0.6" fill="#69808a"/>
<rect x="19.40" y="271.46" width="107.80" height="10.58" rx="2.3" fill="#fff" stroke="#aeb7c0" stroke-width="1"/>
<rect x="19.40" y="283.55" width="107.80" height="10.58" rx="2.3" fill="#fff" stroke="#aeb7c0" stroke-width="1"/>
<rect x="19.40" y="295.63" width="107.80" height="10.58" rx="2.3" fill="#fff" stroke="#aeb7c0" stroke-width="1"/>
<rect x="19.40" y="307.71" width="107.80" height="10.58" rx="2.3" fill="#fff" stroke="#aeb7c0" stroke-width="1"/>
<rect x="19.40" y="319.79" width="107.80" height="10.58" rx="2.3" fill="#fff" stroke="#aeb7c0" stroke-width="1"/>
<rect x="19.40" y="331.88" width="107.80" height="10.58" rx="2.3" fill="#fff" stroke="#aeb7c0" stroke-width="1"/>
<rect x="21.00" y="334.63" width="104.60" height="5.75" rx="0.6" fill="#ffff10"/>
<rect x="19.40" y="343.96" width="107.80" height="10.58" rx="2.3" fill="#fff" stroke="#aeb7c0" stroke-width="1"/>
<rect x="21.00" y="346.71" width="104.60" height="5.75" rx="0.6" fill="#ffff10"/>
<rect x="19.40" y="356.04" width="107.80" height="10.58" rx="2.3" fill="#fff" stroke="#aeb7c0" stroke-width="1"/>
<rect x="21.00" y="358.79" width="104.60" height="5.75" rx="0.6" fill="#ffff10"/>
<rect x="19.40" y="368.13" width="107.80" height="10.58" rx="2.3" fill="#fff" stroke="#aeb7c0" stroke-width="1"/>
<rect x="21.00" y="370.88" width="104.60" height="5.75" rx="0.6" fill="#ffff10"/>
<rect x="19.40" y="380.21" width="107.80" height="10.58" rx="2.3" fill="#fff" stroke="#aeb7c0" stroke-width="1"/>
<rect x="21.00" y="382.96" width="104.60" height="5.75" rx="0.6" fill="#ffff10"/>
<rect x="19.40" y="392.29" width="107.80" height="34.31" rx="2.3" fill="#fff" stroke="#aeb7c0" stroke-width="1"/>
<rect x="133.98" y="102.30" width="107.80" height="10.58" rx="2.3" fill="#fff" stroke="#aeb7c0" stroke-width="1"/>
<rect x="135.38" y="103.90" width="104.90" height="7.00" rx="0.6" fill="#fddfc4"/>
<rect x="133.98" y="114.38" width="107.80" height="10.58" rx="2.3" fill="#fff" stroke="#aeb7c0" stroke-width="1"/>
<rect x="135.38" y="115.98" width="104.90" height="7.00" rx="0.6" fill="#fddfc4"/>
<rect x="133.98" y="126.47" width="107.80" height="10.58" rx="2.3" fill="#fff" stroke="#aeb7c0" stroke-width="1"/>
<rect x="135.38" y="128.07" width="104.90" height="7.00" rx="0.6" fill="#fddfc4"/>
<rect x="133.98" y="138.55" width="107.80" height="10.58" rx="2.3" fill="#fff" stroke="#aeb7c0" stroke-width="1"/>
<rect x="135.38" y="140.15" width="104.90" height="7.00" rx="0.6" fill="#fddfc4"/>
<rect x="133.98" y="150.63" width="107.80" height="10.58" rx="2.3" fill="#fff" stroke="#aeb7c0" stroke-width="1"/>
<rect x="133.98" y="162.72" width="107.80" height="10.58" rx="2.3" fill="#fff" stroke="#aeb7c0" stroke-width="1"/>
<rect x="133.98" y="174.80" width="107.80" height="10.58" rx="2.3" fill="#fff" stroke="#aeb7c0" stroke-width="1"/>
<rect x="133.98" y="186.88" width="107.80" height="10.58" rx="2.3" fill="#fff" stroke="#aeb7c0" stroke-width="1"/>
<rect x="133.98" y="198.96" width="107.80" height="10.58" rx="2.3" fill="#fff" stroke="#aeb7c0" stroke-width="1"/>
<rect x="133.98" y="211.05" width="107.80" height="10.58" rx="2.3" fill="#fff" stroke="#aeb7c0" stroke-width="1"/>
<rect x="133.98" y="223.13" width="107.80" height="10.58" rx="2.3" fill="#fff" stroke="#aeb7c0" stroke-width="1"/>
<rect x="133.98" y="235.21" width="107.80" height="10.58" rx="2.3" fill="#fff" stroke="#aeb7c0" stroke-width="1"/>
<rect x="133.98" y="247.30" width="107.80" height="10.58" rx="2.3" fill="#fff" stroke="#aeb7c0" stroke-width="1"/>
<rect x="133.98" y="259.38" width="107.80" height="10.58" rx="2.3" fill="#fff" stroke="#aeb7c0" stroke-width="1"/>
<rect x="133.98" y="271.46" width="107.80" height="10.58" rx="2.3" fill="#fff" stroke="#aeb7c0" stroke-width="1"/>
<rect x="133.98" y="283.55" width="107.80" height="10.58" rx="2.3" fill="#fff" stroke="#aeb7c0" stroke-width="1"/>
<rect x="133.98" y="295.63" width="107.80" height="10.58" rx="2.3" fill="#fff" stroke="#aeb7c0" stroke-width="1"/>
<rect x="133.98" y="307.71" width="107.80" height="10.58" rx="2.3" fill="#fff" stroke="#aeb7c0" stroke-width="1"/>
<rect x="133.98" y="319.79" width="107.80" height="10.58" rx="2.3" fill="#fff" stroke="#aeb7c0" stroke-width="1"/>
<rect x="133.98" y="331.88" width="107.80" height="10.58" rx="2.3" fill="#fff" stroke="#aeb7c0" stroke-width="1"/>
<rect x="133.98" y="343.96" width="107.80" height="10.58" rx="2.3" fill="#fff" stroke="#aeb7c0" stroke-width="1"/>
<rect x="133.98" y="356.04" width="107.80" height="10.58" rx="2.3" fill="#fff" stroke="#aeb7c0" stroke-width="1"/>
<rect x="133.98" y="368.13" width="107.80" height="10.58" rx="2.3" fill="#fff" stroke="#aeb7c0" stroke-width="1"/>
<rect x="133.98" y="380.21" width="107.80" height="10.58" rx="2.3" fill="#fff" stroke="#aeb7c0" stroke-width="1"/>
<rect x="133.98" y="392.29" width="107.80" height="34.31" rx="2.3" fill="#fff" stroke="#aeb7c0" stroke-width="1"/>
<rect x="248.56" y="102.30" width="107.80" height="10.58" rx="2.3" fill="#fff" stroke="#aeb7c0" stroke-width="1"/>
<rect x="249.96" y="103.90" width="104.90" height="7.00" rx="0.6" fill="#fddfc4"/>
<rect x="248.56" y="114.38" width="107.80" height="10.58" rx="2.3" fill="#fff" stroke="#aeb7c0" stroke-width="1"/>
<rect x="249.96" y="115.98" width="104.90" height="7.00" rx="0.6" fill="#fddfc4"/>
<rect x="248.56" y="126.47" width="107.80" height="10.58" rx="2.3" fill="#fff" stroke="#aeb7c0" stroke-width="1"/>
<rect x="249.96" y="128.07" width="104.90" height="7.00" rx="0.6" fill="#fddfc4"/>
<rect x="248.56" y="138.55" width="107.80" height="10.58" rx="2.3" fill="#fff" stroke="#aeb7c0" stroke-width="1"/>
<rect x="249.96" y="140.15" width="104.90" height="7.00" rx="0.6" fill="#fddfc4"/>
<rect x="248.56" y="150.63" width="107.80" height="10.58" rx="2.3" fill="#fff" stroke="#aeb7c0" stroke-width="1"/>
<rect x="248.56" y="162.72" width="107.80" height="10.58" rx="2.3" fill="#fff" stroke="#aeb7c0" stroke-width="1"/>
<rect x="248.56" y="174.80" width="107.80" height="10.58" rx="2.3" fill="#fff" stroke="#aeb7c0" stroke-width="1"/>
<rect x="250.16" y="177.55" width="104.60" height="5.75" rx="0.6" fill="#f8868a"/>
<rect x="248.56" y="186.88" width="107.80" height="10.58" rx="2.3" fill="#fff" stroke="#aeb7c0" stroke-width="1"/>
<rect x="250.16" y="189.63" width="104.60" height="5.75" rx="0.6" fill="#f8868a"/>
<rect x="248.56" y="198.96" width="107.80" height="10.58" rx="2.3" fill="#fff" stroke="#aeb7c0" stroke-width="1"/>
<rect x="250.16" y="201.71" width="104.60" height="5.75" rx="0.6" fill="#f8868a"/>
<rect x="248.56" y="211.05" width="107.80" height="10.58" rx="2.3" fill="#fff" stroke="#aeb7c0" stroke-width="1"/>
<rect x="250.16" y="213.80" width="104.60" height="5.75" rx="0.6" fill="#f8868a"/>
<rect x="248.56" y="223.13" width="107.80" height="10.58" rx="2.3" fill="#fff" stroke="#aeb7c0" stroke-width="1"/>
<rect x="250.16" y="225.88" width="104.60" height="5.75" rx="0.6" fill="#f8868a"/>
<rect x="248.56" y="235.21" width="107.80" height="10.58" rx="2.3" fill="#fff" stroke="#aeb7c0" stroke-width="1"/>
<rect x="250.16" y="237.96" width="104.60" height="5.75" rx="0.6" fill="#f8868a"/>
<rect x="248.56" y="247.30" width="107.80" height="10.58" rx="2.3" fill="#fff" stroke="#aeb7c0" stroke-width="1"/>
<rect x="250.16" y="250.05" width="104.60" height="5.75" rx="0.6" fill="#f8868a"/>
<rect x="248.56" y="259.38" width="107.80" height="10.58" rx="2.3" fill="#fff" stroke="#aeb7c0" stroke-width="1"/>
<rect x="248.56" y="271.46" width="107.80" height="10.58" rx="2.3" fill="#fff" stroke="#aeb7c0" stroke-width="1"/>
<rect x="248.56" y="283.55" width="107.80" height="10.58" rx="2.3" fill="#fff" stroke="#aeb7c0" stroke-width="1"/>
<rect x="248.56" y="295.63" width="107.80" height="10.58" rx="2.3" fill="#fff" stroke="#aeb7c0" stroke-width="1"/>
<rect x="248.56" y="307.71" width="107.80" height="10.58" rx="2.3" fill="#fff" stroke="#aeb7c0" stroke-width="1"/>
<rect x="248.56" y="319.79" width="107.80" height="10.58" rx="2.3" fill="#fff" stroke="#aeb7c0" stroke-width="1"/>
<rect x="248.56" y="331.88" width="107.80" height="10.58" rx="2.3" fill="#fff" stroke="#aeb7c0" stroke-width="1"/>
<rect x="248.56" y="343.96" width="107.80" height="10.58" rx="2.3" fill="#fff" stroke="#aeb7c0" stroke-width="1"/>
<rect x="248.56" y="356.04" width="107.80" height="10.58" rx="2.3" fill="#fff" stroke="#aeb7c0" stroke-width="1"/>
<rect x="248.56" y="368.13" width="107.80" height="10.58" rx="2.3" fill="#fff" stroke="#aeb7c0" stroke-width="1"/>
<rect x="248.56" y="380.21" width="107.80" height="10.58" rx="2.3" fill="#fff" stroke="#aeb7c0" stroke-width="1"/>
<rect x="248.56" y="392.29" width="107.80" height="34.31" rx="2.3" fill="#f0f0f0" stroke="#a3bddc" stroke-width="1"/>
<rect x="363.14" y="102.30" width="107.80" height="10.58" rx="2.3" fill="#fff" stroke="#aeb7c0" stroke-width="1"/>
<rect x="364.54" y="103.90" width="104.90" height="7.00" rx="0.6" fill="#fddfc4"/>
<rect x="363.14" y="114.38" width="107.80" height="10.58" rx="2.3" fill="#fff" stroke="#aeb7c0" stroke-width="1"/>
<rect x="364.54" y="115.98" width="104.90" height="7.00" rx="0.6" fill="#fddfc4"/>
<rect x="363.14" y="126.47" width="107.80" height="10.58" rx="2.3" fill="#fff" stroke="#aeb7c0" stroke-width="1"/>
<rect x="364.54" y="128.07" width="104.90" height="7.00" rx="0.6" fill="#fddfc4"/>
<rect x="363.14" y="138.55" width="107.80" height="10.58" rx="2.3" fill="#fff" stroke="#aeb7c0" stroke-width="1"/>
<rect x="364.54" y="140.15" width="104.90" height="7.00" rx="0.6" fill="#fddfc4"/>
<rect x="363.14" y="150.63" width="107.80" height="10.58" rx="2.3" fill="#fff" stroke="#aeb7c0" stroke-width="1"/>
<rect x="363.14" y="162.72" width="107.80" height="10.58" rx="2.3" fill="#fff" stroke="#aeb7c0" stroke-width="1"/>
<rect x="363.14" y="174.80" width="107.80" height="10.58" rx="2.3" fill="#fff" stroke="#aeb7c0" stroke-width="1"/>
<rect x="364.74" y="177.55" width="104.60" height="5.75" rx="0.6" fill="#f8868a"/>
<rect x="363.14" y="186.88" width="107.80" height="10.58" rx="2.3" fill="#fff" stroke="#aeb7c0" stroke-width="1"/>
<rect x="364.74" y="189.63" width="104.60" height="5.75" rx="0.6" fill="#f8868a"/>
<rect x="363.14" y="198.96" width="107.80" height="10.58" rx="2.3" fill="#fff" stroke="#aeb7c0" stroke-width="1"/>
<rect x="364.74" y="201.71" width="104.60" height="5.75" rx="0.6" fill="#f8868a"/>
<rect x="363.14" y="211.05" width="107.80" height="10.58" rx="2.3" fill="#fff" stroke="#aeb7c0" stroke-width="1"/>
<rect x="364.74" y="213.80" width="104.60" height="5.75" rx="0.6" fill="#f8868a"/>
<rect x="363.14" y="223.13" width="107.80" height="10.58" rx="2.3" fill="#fff" stroke="#aeb7c0" stroke-width="1"/>
<rect x="364.74" y="225.88" width="104.60" height="5.75" rx="0.6" fill="#f8868a"/>
<rect x="363.14" y="235.21" width="107.80" height="10.58" rx="2.3" fill="#fff" stroke="#aeb7c0" stroke-width="1"/>
<rect x="364.74" y="237.96" width="104.60" height="5.75" rx="0.6" fill="#f8868a"/>
<rect x="363.14" y="247.30" width="107.80" height="10.58" rx="2.3" fill="#fff" stroke="#aeb7c0" stroke-width="1"/>
<rect x="364.74" y="250.05" width="104.60" height="5.75" rx="0.6" fill="#f8868a"/>
<rect x="363.14" y="259.38" width="107.80" height="10.58" rx="2.3" fill="#fff" stroke="#aeb7c0" stroke-width="1"/>
<rect x="363.14" y="271.46" width="107.80" height="10.58" rx="2.3" fill="#fff" stroke="#aeb7c0" stroke-width="1"/>
<rect x="363.14" y="283.55" width="107.80" height="10.58" rx="2.3" fill="#fff" stroke="#aeb7c0" stroke-width="1"/>
<rect x="363.14" y="295.63" width="107.80" height="10.58" rx="2.3" fill="#fff" stroke="#aeb7c0" stroke-width="1"/>
<rect x="363.14" y="307.71" width="107.80" height="10.58" rx="2.3" fill="#fff" stroke="#aeb7c0" stroke-width="1"/>
<rect x="363.14" y="319.79" width="107.80" height="106.81" rx="2.3" fill="#fff" stroke="#aeb7c0" stroke-width="1"/>
<rect x="477.72" y="102.30" width="107.80" height="10.58" rx="2.3" fill="#fff" stroke="#aeb7c0" stroke-width="1"/>
<rect x="479.12" y="103.90" width="104.90" height="7.00" rx="0.6" fill="#fddfc4"/>
<rect x="477.72" y="114.38" width="107.80" height="10.58" rx="2.3" fill="#fff" stroke="#aeb7c0" stroke-width="1"/>
<rect x="479.12" y="115.98" width="104.90" height="7.00" rx="0.6" fill="#fddfc4"/>
<rect x="477.72" y="126.47" width="107.80" height="10.58" rx="2.3" fill="#fff" stroke="#aeb7c0" stroke-width="1"/>
<rect x="479.12" y="128.07" width="104.90" height="7.00" rx="0.6" fill="#fddfc4"/>
<rect x="477.72" y="138.55" width="107.80" height="10.58" rx="2.3" fill="#fff" stroke="#aeb7c0" stroke-width="1"/>
<rect x="479.12" y="140.15" width="104.90" height="7.00" rx="0.6" fill="#fddfc4"/>
<rect x="477.72" y="150.63" width="107.80" height="10.58" rx="2.3" fill="#fff" stroke="#aeb7c0" stroke-width="1"/>
<rect x="477.72" y="162.72" width="107.80" height="10.58" rx="2.3" fill="#fff" stroke="#aeb7c0" stroke-width="1"/>
<rect x="477.72" y="174.80" width="107.80" height="10.58" rx="2.3" fill="#fff" stroke="#aeb7c0" stroke-width="1"/>
<rect x="479.32" y="177.55" width="104.60" height="5.75" rx="0.6" fill="#f8868a"/>
<rect x="477.72" y="186.88" width="107.80" height="10.58" rx="2.3" fill="#fff" stroke="#aeb7c0" stroke-width="1"/>
<rect x="479.32" y="189.63" width="104.60" height="5.75" rx="0.6" fill="#f8868a"/>
<rect x="477.72" y="198.96" width="107.80" height="10.58" rx="2.3" fill="#fff" stroke="#aeb7c0" stroke-width="1"/>
<rect x="479.32" y="201.71" width="104.60" height="5.75" rx="0.6" fill="#f8868a"/>
<rect x="477.72" y="211.05" width="107.80" height="10.58" rx="2.3" fill="#fff" stroke="#aeb7c0" stroke-width="1"/>
<rect x="479.32" y="213.80" width="104.60" height="5.75" rx="0.6" fill="#f8868a"/>
<rect x="477.72" y="223.13" width="107.80" height="10.58" rx="2.3" fill="#fff" stroke="#aeb7c0" stroke-width="1"/>
<rect x="479.32" y="225.88" width="104.60" height="5.75" rx="0.6" fill="#f8868a"/>
<rect x="477.72" y="235.21" width="107.80" height="10.58" rx="2.3" fill="#fff" stroke="#aeb7c0" stroke-width="1"/>
<rect x="479.32" y="237.96" width="104.60" height="5.75" rx="0.6" fill="#f8868a"/>
<rect x="477.72" y="247.30" width="107.80" height="10.58" rx="2.3" fill="#fff" stroke="#aeb7c0" stroke-width="1"/>
<rect x="479.32" y="250.05" width="104.60" height="5.75" rx="0.6" fill="#f8868a"/>
<rect x="477.72" y="259.38" width="107.80" height="34.75" rx="2.3" fill="#fff" stroke="#aeb7c0" stroke-width="1"/>
<rect x="477.72" y="295.63" width="107.80" height="10.58" rx="2.3" fill="#fff" stroke="#aeb7c0" stroke-width="1"/>
<rect x="477.72" y="307.71" width="107.80" height="10.58" rx="2.3" fill="#fff" stroke="#aeb7c0" stroke-width="1"/>
<rect x="477.72" y="319.79" width="107.80" height="10.58" rx="2.3" fill="#fff" stroke="#aeb7c0" stroke-width="1"/>
<rect x="477.72" y="331.88" width="107.80" height="10.58" rx="2.3" fill="#fff" stroke="#aeb7c0" stroke-width="1"/>
<rect x="479.32" y="334.63" width="104.60" height="5.75" rx="0.6" fill="#80fa05"/>
<rect x="477.72" y="343.96" width="107.80" height="10.58" rx="2.3" fill="#fff" stroke="#aeb7c0" stroke-width="1"/>
<rect x="479.32" y="346.71" width="104.60" height="5.75" rx="0.6" fill="#80fa05"/>
<rect x="477.72" y="356.04" width="107.80" height="10.58" rx="2.3" fill="#fff" stroke="#aeb7c0" stroke-width="1"/>
<rect x="479.32" y="358.79" width="104.60" height="5.75" rx="0.6" fill="#ffff10"/>
<rect x="477.72" y="368.13" width="107.80" height="10.58" rx="2.3" fill="#fff" stroke="#aeb7c0" stroke-width="1"/>
<rect x="479.32" y="370.88" width="104.60" height="5.75" rx="0.6" fill="#ffff10"/>
<rect x="477.72" y="380.21" width="107.80" height="10.58" rx="2.3" fill="#fff" stroke="#aeb7c0" stroke-width="1"/>
<rect x="479.32" y="382.96" width="104.60" height="5.75" rx="0.6" fill="#ffff10"/>
<rect x="477.72" y="392.29" width="107.80" height="34.31" rx="2.3" fill="#f0f0f0" stroke="#aeb7c0" stroke-width="1"/>
<rect x="592.30" y="102.30" width="107.80" height="10.58" rx="2.3" fill="#fff" stroke="#aeb7c0" stroke-width="1"/>
<rect x="592.30" y="114.38" width="107.80" height="10.58" rx="2.3" fill="#fff" stroke="#aeb7c0" stroke-width="1"/>
<rect x="592.30" y="126.47" width="107.80" height="10.58" rx="2.3" fill="#fff" stroke="#aeb7c0" stroke-width="1"/>
<rect x="592.30" y="138.55" width="107.80" height="191.83" rx="2.3" fill="#fff" stroke="#aeb7c0" stroke-width="1"/>
<rect x="593.60" y="141.45" width="105.20" height="186.13" fill="#69808a"/>
<rect x="592.30" y="331.88" width="107.80" height="10.58" rx="2.3" fill="#fff" stroke="#aeb7c0" stroke-width="1"/>
<rect x="592.30" y="343.96" width="107.80" height="10.58" rx="2.3" fill="#fff" stroke="#aeb7c0" stroke-width="1"/>
<rect x="592.30" y="356.04" width="107.80" height="10.58" rx="2.3" fill="#fff" stroke="#aeb7c0" stroke-width="1"/>
<rect x="592.30" y="368.13" width="107.80" height="10.58" rx="2.3" fill="#fff" stroke="#aeb7c0" stroke-width="1"/>
<rect x="592.30" y="380.21" width="107.80" height="10.58" rx="2.3" fill="#fff" stroke="#aeb7c0" stroke-width="1"/>
<rect x="592.30" y="392.29" width="107.80" height="34.31" rx="2.3" fill="#f0f0f0" stroke="#aeb7c0" stroke-width="1"/>
<rect x="357.6" y="391.39" width="3.2" height="12" fill="#f2c24f"/>
</svg>
<div class="t g" style="left:21.20px;top:106.00px;font-size:5.40px;transform-origin:0 0;transform:scaleX(0.956);color:#2a1c12;">Neue Patienten</div>
<div class="t g" style="left:21.20px;top:118.00px;font-size:5.40px;transform-origin:0 0;transform:scaleX(0.956);color:#2a1c12;">Neue Patienten</div>
<div class="t g" style="left:21.20px;top:130.00px;font-size:5.40px;transform-origin:0 0;transform:scaleX(0.956);color:#2a1c12;">Neue Patienten</div>
<div class="t g" style="left:21.20px;top:142.00px;font-size:5.40px;transform-origin:0 0;transform:scaleX(0.956);color:#2a1c12;">Neue Patienten</div>
<div class="t g" style="left:21.20px;top:336.00px;font-size:5.40px;transform-origin:0 0;transform:scaleX(0.956);color:#333300;">Gutachten</div>
<div class="t g" style="left:21.20px;top:348.00px;font-size:5.40px;transform-origin:0 0;transform:scaleX(0.956);color:#333300;">Gutachten</div>
<div class="t g" style="left:21.20px;top:360.00px;font-size:5.40px;transform-origin:0 0;transform:scaleX(0.956);color:#333300;">Gutachten</div>
<div class="t g" style="left:21.20px;top:372.00px;font-size:5.40px;transform-origin:0 0;transform:scaleX(0.956);color:#333300;">Gutachten</div>
<div class="t g" style="left:21.20px;top:384.00px;font-size:5.40px;transform-origin:0 0;transform:scaleX(0.956);color:#333300;">Gutachten</div>
<div class="t g" style="left:65.95px;top:396.00px;font-size:5.40px;transform-origin:0 0;transform:scaleX(0.960);color:#262626;">Pause</div>
<div class="t g" style="left:135.78px;top:106.00px;font-size:5.40px;transform-origin:0 0;transform:scaleX(0.956);color:#2a1c12;">Neue Patienten</div>
<div class="t g" style="left:135.78px;top:118.00px;font-size:5.40px;transform-origin:0 0;transform:scaleX(0.956);color:#2a1c12;">Neue Patienten</div>
<div class="t g" style="left:135.78px;top:130.00px;font-size:5.40px;transform-origin:0 0;transform:scaleX(0.956);color:#2a1c12;">Neue Patienten</div>
<div class="t g" style="left:135.78px;top:142.00px;font-size:5.40px;transform-origin:0 0;transform:scaleX(0.956);color:#2a1c12;">Neue Patienten</div>
<div class="t g" style="left:180.53px;top:396.00px;font-size:5.40px;transform-origin:0 0;transform:scaleX(0.960);color:#262626;">Pause</div>
<div class="t g" style="left:250.36px;top:106.00px;font-size:5.40px;transform-origin:0 0;transform:scaleX(0.956);color:#2a1c12;">Neue Patienten</div>
<div class="t g" style="left:250.36px;top:118.00px;font-size:5.40px;transform-origin:0 0;transform:scaleX(0.956);color:#2a1c12;">Neue Patienten</div>
<div class="t g" style="left:250.36px;top:130.00px;font-size:5.40px;transform-origin:0 0;transform:scaleX(0.956);color:#2a1c12;">Neue Patienten</div>
<div class="t g" style="left:250.36px;top:142.00px;font-size:5.40px;transform-origin:0 0;transform:scaleX(0.956);color:#2a1c12;">Neue Patienten</div>
<div class="t g" style="left:250.36px;top:179.00px;font-size:5.40px;transform-origin:0 0;transform:scaleX(0.956);color:#4e0e0e;">Internet</div>
<div class="t g" style="left:250.36px;top:191.00px;font-size:5.40px;transform-origin:0 0;transform:scaleX(0.956);color:#4e0e0e;">Internet</div>
<div class="t g" style="left:250.36px;top:203.00px;font-size:5.40px;transform-origin:0 0;transform:scaleX(0.956);color:#4e0e0e;">Internet</div>
<div class="t g" style="left:250.36px;top:215.00px;font-size:5.40px;transform-origin:0 0;transform:scaleX(0.956);color:#4e0e0e;">Internet</div>
<div class="t g" style="left:250.36px;top:227.00px;font-size:5.40px;transform-origin:0 0;transform:scaleX(0.956);color:#4e0e0e;">Internet</div>
<div class="t g" style="left:250.36px;top:239.00px;font-size:5.40px;transform-origin:0 0;transform:scaleX(0.956);color:#4e0e0e;">Internet</div>
<div class="t g" style="left:250.36px;top:251.00px;font-size:5.40px;transform-origin:0 0;transform:scaleX(0.956);color:#4e0e0e;">Internet</div>
<div class="t g" style="left:364.94px;top:106.00px;font-size:5.40px;transform-origin:0 0;transform:scaleX(0.956);color:#2a1c12;">Neue Patienten</div>
<div class="t g" style="left:364.94px;top:118.00px;font-size:5.40px;transform-origin:0 0;transform:scaleX(0.956);color:#2a1c12;">Neue Patienten</div>
<div class="t g" style="left:364.94px;top:130.00px;font-size:5.40px;transform-origin:0 0;transform:scaleX(0.956);color:#2a1c12;">Neue Patienten</div>
<div class="t g" style="left:364.94px;top:142.00px;font-size:5.40px;transform-origin:0 0;transform:scaleX(0.956);color:#2a1c12;">Neue Patienten</div>
<div class="t g" style="left:364.94px;top:179.00px;font-size:5.40px;transform-origin:0 0;transform:scaleX(0.956);color:#4e0e0e;">Internet</div>
<div class="t g" style="left:364.94px;top:191.00px;font-size:5.40px;transform-origin:0 0;transform:scaleX(0.956);color:#4e0e0e;">Internet</div>
<div class="t g" style="left:364.94px;top:203.00px;font-size:5.40px;transform-origin:0 0;transform:scaleX(0.956);color:#4e0e0e;">Internet</div>
<div class="t g" style="left:364.94px;top:215.00px;font-size:5.40px;transform-origin:0 0;transform:scaleX(0.956);color:#4e0e0e;">Internet</div>
<div class="t g" style="left:364.94px;top:227.00px;font-size:5.40px;transform-origin:0 0;transform:scaleX(0.956);color:#4e0e0e;">Internet</div>
<div class="t g" style="left:364.94px;top:239.00px;font-size:5.40px;transform-origin:0 0;transform:scaleX(0.956);color:#4e0e0e;">Internet</div>
<div class="t g" style="left:364.94px;top:251.00px;font-size:5.40px;transform-origin:0 0;transform:scaleX(0.956);color:#4e0e0e;">Internet</div>
<div class="t g" style="left:409.69px;top:324.00px;font-size:5.40px;transform-origin:0 0;transform:scaleX(0.960);color:#262626;">Pause</div>
<div class="t g" style="left:479.52px;top:106.00px;font-size:5.40px;transform-origin:0 0;transform:scaleX(0.956);color:#2a1c12;">Neue Patienten</div>
<div class="t g" style="left:479.52px;top:118.00px;font-size:5.40px;transform-origin:0 0;transform:scaleX(0.956);color:#2a1c12;">Neue Patienten</div>
<div class="t g" style="left:479.52px;top:130.00px;font-size:5.40px;transform-origin:0 0;transform:scaleX(0.956);color:#2a1c12;">Neue Patienten</div>
<div class="t g" style="left:479.52px;top:142.00px;font-size:5.40px;transform-origin:0 0;transform:scaleX(0.956);color:#2a1c12;">Neue Patienten</div>
<div class="t g" style="left:479.52px;top:179.00px;font-size:5.40px;transform-origin:0 0;transform:scaleX(0.956);color:#4e0e0e;">Internet</div>
<div class="t g" style="left:479.52px;top:191.00px;font-size:5.40px;transform-origin:0 0;transform:scaleX(0.956);color:#4e0e0e;">Internet</div>
<div class="t g" style="left:479.52px;top:203.00px;font-size:5.40px;transform-origin:0 0;transform:scaleX(0.956);color:#4e0e0e;">Internet</div>
<div class="t g" style="left:479.52px;top:215.00px;font-size:5.40px;transform-origin:0 0;transform:scaleX(0.956);color:#4e0e0e;">Internet</div>
<div class="t g" style="left:479.52px;top:227.00px;font-size:5.40px;transform-origin:0 0;transform:scaleX(0.956);color:#4e0e0e;">Internet</div>
<div class="t g" style="left:479.52px;top:239.00px;font-size:5.40px;transform-origin:0 0;transform:scaleX(0.956);color:#4e0e0e;">Internet</div>
<div class="t g" style="left:479.52px;top:251.00px;font-size:5.40px;transform-origin:0 0;transform:scaleX(0.956);color:#4e0e0e;">Internet</div>
<div class="t g" style="left:479.52px;top:263.00px;font-size:5.40px;transform-origin:0 0;transform:scaleX(0.956);color:#262626;">Puffer</div>
<div class="t g" style="left:479.52px;top:360.00px;font-size:5.40px;transform-origin:0 0;transform:scaleX(0.956);color:#333300;">Gutachten</div>
<div class="t g" style="left:479.52px;top:372.00px;font-size:5.40px;transform-origin:0 0;transform:scaleX(0.956);color:#333300;">Gutachten</div>
<div class="t g" style="left:479.52px;top:384.00px;font-size:5.40px;transform-origin:0 0;transform:scaleX(0.956);color:#333300;">Gutachten</div>
<div class="t g" style="left:2.50px;top:102.00px;font-size:6.20px;transform-origin:0 0;transform:scaleX(0.870);font-weight:bold;color:#0a0a0a;">8</div>
<div class="t g" style="left:7.50px;top:104.00px;font-size:4.70px;transform-origin:0 0;transform:scaleX(0.880);color:#1a1a1a;">00</div>
<div class="t g" style="left:7.80px;top:116.00px;font-size:4.70px;transform-origin:0 0;transform:scaleX(0.842);color:#1a1a1a;">10</div>
<div class="t g" style="left:7.80px;top:128.00px;font-size:4.70px;transform-origin:0 0;transform:scaleX(0.842);color:#1a1a1a;">20</div>
<div class="t g" style="left:7.80px;top:140.00px;font-size:4.70px;transform-origin:0 0;transform:scaleX(0.842);color:#1a1a1a;">30</div>
<div class="t g" style="left:7.80px;top:152.00px;font-size:4.70px;transform-origin:0 0;transform:scaleX(0.842);color:#1a1a1a;">40</div>
<div class="t g" style="left:7.80px;top:164.00px;font-size:4.70px;transform-origin:0 0;transform:scaleX(0.842);color:#1a1a1a;">50</div>
<div class="t g" style="left:2.50px;top:175.00px;font-size:6.20px;transform-origin:0 0;transform:scaleX(0.870);font-weight:bold;color:#0a0a0a;">9</div>
<div class="t g" style="left:7.50px;top:176.00px;font-size:4.70px;transform-origin:0 0;transform:scaleX(0.880);color:#1a1a1a;">00</div>
<div class="t g" style="left:7.80px;top:188.00px;font-size:4.70px;transform-origin:0 0;transform:scaleX(0.842);color:#1a1a1a;">10</div>
<div class="t g" style="left:7.80px;top:200.00px;font-size:4.70px;transform-origin:0 0;transform:scaleX(0.842);color:#1a1a1a;">20</div>
<div class="t g" style="left:7.80px;top:212.00px;font-size:4.70px;transform-origin:0 0;transform:scaleX(0.842);color:#1a1a1a;">30</div>
<div class="t g" style="left:7.80px;top:225.00px;font-size:4.70px;transform-origin:0 0;transform:scaleX(0.842);color:#1a1a1a;">40</div>
<div class="t g" style="left:7.80px;top:237.00px;font-size:4.70px;transform-origin:0 0;transform:scaleX(0.842);color:#1a1a1a;">50</div>
<div class="t g" style="left:2.50px;top:247.00px;font-size:6.20px;transform-origin:0 0;transform:scaleX(0.754);font-weight:bold;color:#0a0a0a;">10</div>
<div class="t g" style="left:10.10px;top:249.00px;font-size:4.70px;transform-origin:0 0;transform:scaleX(0.880);color:#1a1a1a;">00</div>
<div class="t g" style="left:10.40px;top:261.00px;font-size:4.70px;transform-origin:0 0;transform:scaleX(0.842);color:#1a1a1a;">10</div>
<div class="t g" style="left:10.40px;top:273.00px;font-size:4.70px;transform-origin:0 0;transform:scaleX(0.842);color:#1a1a1a;">20</div>
<div class="t g" style="left:10.40px;top:285.00px;font-size:4.70px;transform-origin:0 0;transform:scaleX(0.842);color:#1a1a1a;">30</div>
<div class="t g" style="left:10.40px;top:297.00px;font-size:4.70px;transform-origin:0 0;transform:scaleX(0.842);color:#1a1a1a;">40</div>
<div class="t g" style="left:10.40px;top:309.00px;font-size:4.70px;transform-origin:0 0;transform:scaleX(0.842);color:#1a1a1a;">50</div>
<div class="t g" style="left:2.50px;top:320.00px;font-size:6.20px;transform-origin:0 0;transform:scaleX(0.793);font-weight:bold;color:#0a0a0a;">11</div>
<div class="t g" style="left:10.10px;top:321.00px;font-size:4.70px;transform-origin:0 0;transform:scaleX(0.880);color:#1a1a1a;">00</div>
<div class="t g" style="left:10.40px;top:333.00px;font-size:4.70px;transform-origin:0 0;transform:scaleX(0.842);color:#1a1a1a;">10</div>
<div class="t g" style="left:10.40px;top:345.00px;font-size:4.70px;transform-origin:0 0;transform:scaleX(0.842);color:#1a1a1a;">20</div>
<div class="t g" style="left:10.40px;top:357.00px;font-size:4.70px;transform-origin:0 0;transform:scaleX(0.842);color:#1a1a1a;">30</div>
<div class="t g" style="left:10.40px;top:370.00px;font-size:4.70px;transform-origin:0 0;transform:scaleX(0.842);color:#1a1a1a;">40</div>
<div class="t g" style="left:10.40px;top:382.00px;font-size:4.70px;transform-origin:0 0;transform:scaleX(0.842);color:#1a1a1a;">50</div>
<div class="t g" style="left:2.50px;top:392.00px;font-size:6.20px;transform-origin:0 0;transform:scaleX(0.754);font-weight:bold;color:#0a0a0a;">12</div>
<div class="t g" style="left:10.10px;top:394.00px;font-size:4.70px;transform-origin:0 0;transform:scaleX(0.880);color:#1a1a1a;">00</div>
<div class="t g" style="left:10.40px;top:406.00px;font-size:4.70px;transform-origin:0 0;transform:scaleX(0.842);color:#1a1a1a;">10</div>
<div class="t g" style="left:10.40px;top:418.00px;font-size:4.70px;transform-origin:0 0;transform:scaleX(0.842);color:#1a1a1a;">20</div>
<div class="a" style="left:705.5px;top:101px;width:12px;height:322px;background:#fff"></div>
<div class="a" style="left:707.5px;top:101px;width:6px;height:322px;background:#f1f1f1"></div>
<div class="a" style="left:707.5px;top:109px;width:5.6px;height:7.5px;background:#cdcdcd"></div>
<svg class="a" style="left:706px;top:101px" width="10" height="322" viewBox="0 0 10 322"><path d="M2.6 5.3 L4.2 3.6 L5.8 5.3" stroke="#444" stroke-width="0.9" fill="none"/><path d="M2.6 316.4 L4.2 318.1 L5.8 316.4" stroke="#444" stroke-width="0.9" fill="none"/></svg>
<div class="a" id="status"></div>
<div class="t" style="left:1.50px;top:426.00px;font-size:5.40px;transform-origin:0 0;transform:scaleX(0.938);color:#1a2b44;">aktueller Patient: Mentz, Tommy</div>
<div class="t" style="left:168.00px;top:426.00px;font-size:5.40px;transform-origin:0 0;transform:scaleX(0.907);color:#1a2b44;">aktuelle Patientendaten wurden um 13:40:31 empfangen.</div>
<div class="t" style="left:567.85px;top:426.00px;font-size:5.40px;transform-origin:0 0;transform:scaleX(0.900);color:#1a2b44;">1</div>
<div class="t" style="left:576.18px;top:426.00px;font-size:5.40px;transform-origin:0 0;transform:scaleX(0.900);color:#1a2b44;">2</div>
<div class="t" style="left:584.51px;top:426.00px;font-size:5.40px;transform-origin:0 0;transform:scaleX(0.900);color:#1a2b44;">3</div>
<div class="t" style="left:592.84px;top:426.00px;font-size:5.40px;transform-origin:0 0;transform:scaleX(0.900);color:#1a2b44;">4</div>
<div class="t" style="left:601.17px;top:426.00px;font-size:5.40px;transform-origin:0 0;transform:scaleX(0.900);color:#1a2b44;">5</div>
<div class="t" style="left:609.50px;top:426.00px;font-size:5.40px;transform-origin:0 0;transform:scaleX(0.900);color:#1a2b44;">6</div>
<div class="t" style="left:617.83px;top:426.00px;font-size:5.40px;transform-origin:0 0;transform:scaleX(0.900);color:#1a2b44;">7</div>
<div class="a" style="left:573.0px;top:424px;width:1px;height:5px;background:#a9c1de"></div>
<div class="a" style="left:581.3px;top:424px;width:1px;height:5px;background:#a9c1de"></div>
<div class="a" style="left:589.7px;top:424px;width:1px;height:5px;background:#a9c1de"></div>
<div class="a" style="left:598.0px;top:424px;width:1px;height:5px;background:#a9c1de"></div>
<div class="a" style="left:606.3px;top:424px;width:1px;height:5px;background:#a9c1de"></div>
<div class="a" style="left:614.6px;top:424px;width:1px;height:5px;background:#a9c1de"></div>
<svg class="a" style="left:626px;top:422.5px" width="8" height="8" viewBox="0 0 8 8"><circle cx="4.6" cy="2.8" r="1.9" stroke="#c0504a" stroke-width="0.9" fill="#f6e8e8"/><path d="M3.2 4.2 L0.8 7" stroke="#c0504a" stroke-width="1"/></svg>
<div class="t" style="left:634.30px;top:426.00px;font-size:5.40px;transform-origin:0 0;transform:scaleX(0.933);color:#1a2b44;">Vergr&ouml;&szlig;ern</div>
<svg class="a" style="left:668px;top:422.5px" width="8" height="8" viewBox="0 0 8 8"><circle cx="4.6" cy="2.8" r="1.9" stroke="#777" stroke-width="0.9" fill="#eee"/><path d="M3.2 4.2 L0.8 7" stroke="#777" stroke-width="1"/></svg>
<div class="t" style="left:676.00px;top:426.00px;font-size:5.40px;transform-origin:0 0;transform:scaleX(0.925);color:#1a2b44;">Verkleinern</div>
<div class="t" style="left:710.00px;top:426.00px;font-size:5.40px;transform-origin:0 0;transform:scaleX(0.913);color:#1a2b44;">Montag, der 25.11.2013</div>
<div class="t" style="left:767.50px;top:426.00px;font-size:5.40px;transform-origin:0 0;transform:scaleX(0.833);color:#1a2b44;">13:41:24</div>
<div class="a" id="rp"></div>
<svg class="a" style="left:717px;top:76px" width="83" height="290" viewBox="717 76 83 290">
<rect x="720.3" y="77.60" width="75" height="267.10" fill="#fff" stroke="#bcc5cf" stroke-width="0.9"/>
<rect x="729.6" y="90.40" width="65.3" height="53.90" fill="#f4f4f4"/>
<rect x="720.7" y="90.00" width="74.2" height="0.8" fill="#d2d7dd"/>
<rect x="729" y="90.40" width="0.8" height="53.90" fill="#d5dae0"/>
<ellipse cx="761.00" cy="96.10" rx="3.5" ry="4.1" fill="#f8f84a"/>
<rect x="747.80" y="118.15" width="8.4" height="8.4" fill="#2e8ee2"/>
<ellipse cx="761.00" cy="131.10" rx="3.5" ry="4.1" fill="#f8f84a"/>
<rect x="729.6" y="157.10" width="65.3" height="53.90" fill="#f4f4f4"/>
<rect x="720.7" y="156.70" width="74.2" height="0.8" fill="#d2d7dd"/>
<rect x="729" y="157.10" width="0.8" height="53.90" fill="#d5dae0"/>
<rect x="720.3" y="143.90" width="75" height="0.9" fill="#aeb7c1"/>
<ellipse cx="734.70" cy="180.30" rx="3.5" ry="4.1" fill="#f8f84a"/>
<rect x="729.6" y="223.80" width="65.3" height="53.90" fill="#f4f4f4"/>
<rect x="720.7" y="223.40" width="74.2" height="0.8" fill="#d2d7dd"/>
<rect x="729" y="223.80" width="0.8" height="53.90" fill="#d5dae0"/>
<rect x="720.3" y="210.60" width="75" height="0.9" fill="#aeb7c1"/>
<rect x="729.6" y="290.50" width="65.3" height="53.90" fill="#f4f4f4"/>
<rect x="720.7" y="290.10" width="74.2" height="0.8" fill="#d2d7dd"/>
<rect x="729" y="290.50" width="0.8" height="53.90" fill="#d5dae0"/>
<rect x="720.3" y="277.30" width="75" height="0.9" fill="#aeb7c1"/>
<rect x="720.8" y="78.2" width="7.9" height="11.4" fill="#d4e6f8"/>
<path d="M721.9 80.2 L726.9 83.6 L721.9 87Z" fill="#1f80d8"/>
<path d="M733.9 79.3 L730.9 81.4 L733.9 83.5Z" fill="#111"/>
<path d="M791 79.3 L793.8 81.4 L791 83.5Z" fill="#111"/>
</svg>
<div class="t" style="left:752.72px;top:79.00px;font-size:5.30px;transform-origin:0 0;transform:scaleX(0.870);color:#111;">Mai 2014</div>
<div class="t" style="left:729.45px;top:85.00px;font-size:4.90px;transform-origin:0 0;transform:scaleX(0.860);color:#222;">Mo</div>
<div class="t" style="left:740.02px;top:85.00px;font-size:4.90px;transform-origin:0 0;transform:scaleX(0.860);color:#222;">Di</div>
<div class="t" style="left:748.35px;top:85.00px;font-size:4.90px;transform-origin:0 0;transform:scaleX(0.860);color:#222;">Mi</div>
<div class="t" style="left:756.21px;top:85.00px;font-size:4.90px;transform-origin:0 0;transform:scaleX(0.860);color:#222;">Do</div>
<div class="t" style="left:766.32px;top:85.00px;font-size:4.90px;transform-origin:0 0;transform:scaleX(0.860);color:#222;">Fr</div>
<div class="t" style="left:773.95px;top:85.00px;font-size:4.90px;transform-origin:0 0;transform:scaleX(0.860);color:#222;">Sa</div>
<div class="t" style="left:782.65px;top:85.00px;font-size:4.90px;transform-origin:0 0;transform:scaleX(0.860);color:#222;">So</div>
<div class="t g" style="left:722.17px;top:94.00px;font-size:5.10px;transform-origin:0 0;transform:scaleX(0.820);color:#2a2a2a;">18</div>
<div class="t g" style="left:759.70px;top:94.00px;font-size:5.20px;transform-origin:0 0;transform:scaleX(0.830);font-weight:bold;color:#151515;">1</div>
<div class="t g" style="left:768.40px;top:94.00px;font-size:5.20px;transform-origin:0 0;transform:scaleX(0.830);color:#151515;">2</div>
<div class="t g" style="left:777.20px;top:94.00px;font-size:5.20px;transform-origin:0 0;transform:scaleX(0.830);color:#c43838;">3</div>
<div class="t g" style="left:785.90px;top:94.00px;font-size:5.20px;transform-origin:0 0;transform:scaleX(0.830);color:#c43838;">4</div>
<div class="t g" style="left:722.17px;top:103.00px;font-size:5.10px;transform-origin:0 0;transform:scaleX(0.820);color:#2a2a2a;">19</div>
<div class="t g" style="left:733.40px;top:103.00px;font-size:5.20px;transform-origin:0 0;transform:scaleX(0.830);color:#151515;">5</div>
<div class="t g" style="left:742.10px;top:103.00px;font-size:5.20px;transform-origin:0 0;transform:scaleX(0.830);color:#151515;">6</div>
<div class="t g" style="left:750.90px;top:103.00px;font-size:5.20px;transform-origin:0 0;transform:scaleX(0.830);color:#151515;">7</div>
<div class="t g" style="left:759.70px;top:103.00px;font-size:5.20px;transform-origin:0 0;transform:scaleX(0.830);color:#151515;">8</div>
<div class="t g" style="left:768.40px;top:103.00px;font-size:5.20px;transform-origin:0 0;transform:scaleX(0.830);color:#151515;">9</div>
<div class="t g" style="left:776.00px;top:103.00px;font-size:5.20px;transform-origin:0 0;transform:scaleX(0.830);color:#c43838;">10</div>
<div class="t g" style="left:784.86px;top:103.00px;font-size:5.20px;transform-origin:0 0;transform:scaleX(0.830);color:#c43838;">11</div>
<div class="t g" style="left:722.17px;top:112.00px;font-size:5.10px;transform-origin:0 0;transform:scaleX(0.820);color:#2a2a2a;">20</div>
<div class="t g" style="left:732.20px;top:112.00px;font-size:5.20px;transform-origin:0 0;transform:scaleX(0.830);color:#151515;">12</div>
<div class="t g" style="left:740.90px;top:112.00px;font-size:5.20px;transform-origin:0 0;transform:scaleX(0.830);color:#151515;">13</div>
<div class="t g" style="left:749.70px;top:112.00px;font-size:5.20px;transform-origin:0 0;transform:scaleX(0.830);color:#151515;">14</div>
<div class="t g" style="left:758.50px;top:112.00px;font-size:5.20px;transform-origin:0 0;transform:scaleX(0.830);color:#151515;">15</div>
<div class="t g" style="left:767.20px;top:112.00px;font-size:5.20px;transform-origin:0 0;transform:scaleX(0.830);color:#151515;">16</div>
<div class="t g" style="left:776.00px;top:112.00px;font-size:5.20px;transform-origin:0 0;transform:scaleX(0.830);color:#c43838;">17</div>
<div class="t g" style="left:784.70px;top:112.00px;font-size:5.20px;transform-origin:0 0;transform:scaleX(0.830);color:#c43838;">18</div>
<div class="t g" style="left:722.17px;top:120.00px;font-size:5.10px;transform-origin:0 0;transform:scaleX(0.820);color:#2a2a2a;">21</div>
<div class="t g" style="left:732.20px;top:120.00px;font-size:5.20px;transform-origin:0 0;transform:scaleX(0.830);color:#151515;">19</div>
<div class="t g" style="left:740.90px;top:120.00px;font-size:5.20px;transform-origin:0 0;transform:scaleX(0.830);color:#151515;">20</div>
<div class="t g" style="left:749.70px;top:120.00px;font-size:5.20px;transform-origin:0 0;transform:scaleX(0.830);color:#fff;">21</div>
<div class="t g" style="left:758.50px;top:120.00px;font-size:5.20px;transform-origin:0 0;transform:scaleX(0.830);color:#151515;">22</div>
<div class="t g" style="left:767.20px;top:120.00px;font-size:5.20px;transform-origin:0 0;transform:scaleX(0.830);color:#151515;">23</div>
<div class="t g" style="left:776.00px;top:120.00px;font-size:5.20px;transform-origin:0 0;transform:scaleX(0.830);color:#c43838;">24</div>
<div class="t g" style="left:784.70px;top:120.00px;font-size:5.20px;transform-origin:0 0;transform:scaleX(0.830);color:#c43838;">25</div>
<div class="t g" style="left:722.17px;top:129.00px;font-size:5.10px;transform-origin:0 0;transform:scaleX(0.820);color:#2a2a2a;">22</div>
<div class="t g" style="left:732.20px;top:129.00px;font-size:5.20px;transform-origin:0 0;transform:scaleX(0.830);color:#151515;">26</div>
<div class="t g" style="left:740.90px;top:129.00px;font-size:5.20px;transform-origin:0 0;transform:scaleX(0.830);color:#151515;">27</div>
<div class="t g" style="left:749.70px;top:129.00px;font-size:5.20px;transform-origin:0 0;transform:scaleX(0.830);color:#151515;">28</div>
<div class="t g" style="left:758.50px;top:129.00px;font-size:5.20px;transform-origin:0 0;transform:scaleX(0.830);font-weight:bold;color:#151515;">29</div>
<div class="t g" style="left:767.20px;top:129.00px;font-size:5.20px;transform-origin:0 0;transform:scaleX(0.830);color:#151515;">30</div>
<div class="t g" style="left:776.00px;top:129.00px;font-size:5.20px;transform-origin:0 0;transform:scaleX(0.830);color:#c43838;">31</div>
<div class="t g" style="left:722.17px;top:138.00px;font-size:5.10px;transform-origin:0 0;transform:scaleX(0.820);color:#2a2a2a;">23</div>
<div class="t" style="left:752.71px;top:146.00px;font-size:5.30px;transform-origin:0 0;transform:scaleX(0.870);color:#111;">Jun 2014</div>
<div class="t" style="left:729.45px;top:152.00px;font-size:4.90px;transform-origin:0 0;transform:scaleX(0.860);color:#222;">Mo</div>
<div class="t" style="left:740.02px;top:152.00px;font-size:4.90px;transform-origin:0 0;transform:scaleX(0.860);color:#222;">Di</div>
<div class="t" style="left:748.35px;top:152.00px;font-size:4.90px;transform-origin:0 0;transform:scaleX(0.860);color:#222;">Mi</div>
<div class="t" style="left:756.21px;top:152.00px;font-size:4.90px;transform-origin:0 0;transform:scaleX(0.860);color:#222;">Do</div>
<div class="t" style="left:766.32px;top:152.00px;font-size:4.90px;transform-origin:0 0;transform:scaleX(0.860);color:#222;">Fr</div>
<div class="t" style="left:773.95px;top:152.00px;font-size:4.90px;transform-origin:0 0;transform:scaleX(0.860);color:#222;">Sa</div>
<div class="t" style="left:782.65px;top:152.00px;font-size:4.90px;transform-origin:0 0;transform:scaleX(0.860);color:#222;">So</div>
<div class="t g" style="left:722.17px;top:161.00px;font-size:5.10px;transform-origin:0 0;transform:scaleX(0.820);color:#2a2a2a;">22</div>
<div class="t g" style="left:785.90px;top:161.00px;font-size:5.20px;transform-origin:0 0;transform:scaleX(0.830);color:#c43838;">1</div>
<div class="t g" style="left:722.17px;top:169.00px;font-size:5.10px;transform-origin:0 0;transform:scaleX(0.820);color:#2a2a2a;">23</div>
<div class="t g" style="left:733.40px;top:169.00px;font-size:5.20px;transform-origin:0 0;transform:scaleX(0.830);color:#151515;">2</div>
<div class="t g" style="left:742.10px;top:169.00px;font-size:5.20px;transform-origin:0 0;transform:scaleX(0.830);color:#151515;">3</div>
<div class="t g" style="left:750.90px;top:169.00px;font-size:5.20px;transform-origin:0 0;transform:scaleX(0.830);color:#151515;">4</div>
<div class="t g" style="left:759.70px;top:169.00px;font-size:5.20px;transform-origin:0 0;transform:scaleX(0.830);color:#151515;">5</div>
<div class="t g" style="left:768.40px;top:169.00px;font-size:5.20px;transform-origin:0 0;transform:scaleX(0.830);color:#151515;">6</div>
<div class="t g" style="left:777.20px;top:169.00px;font-size:5.20px;transform-origin:0 0;transform:scaleX(0.830);color:#c43838;">7</div>
<div class="t g" style="left:785.90px;top:169.00px;font-size:5.20px;transform-origin:0 0;transform:scaleX(0.830);color:#c43838;">8</div>
<div class="t g" style="left:722.17px;top:178.00px;font-size:5.10px;transform-origin:0 0;transform:scaleX(0.820);color:#2a2a2a;">24</div>
<div class="t g" style="left:733.40px;top:178.00px;font-size:5.20px;transform-origin:0 0;transform:scaleX(0.830);font-weight:bold;color:#151515;">9</div>
<div class="t g" style="left:740.90px;top:178.00px;font-size:5.20px;transform-origin:0 0;transform:scaleX(0.830);color:#151515;">10</div>
<div class="t g" style="left:749.86px;top:178.00px;font-size:5.20px;transform-origin:0 0;transform:scaleX(0.830);color:#151515;">11</div>
<div class="t g" style="left:758.50px;top:178.00px;font-size:5.20px;transform-origin:0 0;transform:scaleX(0.830);color:#151515;">12</div>
<div class="t g" style="left:767.20px;top:178.00px;font-size:5.20px;transform-origin:0 0;transform:scaleX(0.830);color:#151515;">13</div>
<div class="t g" style="left:776.00px;top:178.00px;font-size:5.20px;transform-origin:0 0;transform:scaleX(0.830);color:#c43838;">14</div>
<div class="t g" style="left:784.70px;top:178.00px;font-size:5.20px;transform-origin:0 0;transform:scaleX(0.830);color:#c43838;">15</div>
<div class="t g" style="left:722.17px;top:187.00px;font-size:5.10px;transform-origin:0 0;transform:scaleX(0.820);color:#2a2a2a;">25</div>
<div class="t g" style="left:732.20px;top:187.00px;font-size:5.20px;transform-origin:0 0;transform:scaleX(0.830);color:#151515;">16</div>
<div class="t g" style="left:740.90px;top:187.00px;font-size:5.20px;transform-origin:0 0;transform:scaleX(0.830);color:#151515;">17</div>
<div class="t g" style="left:749.70px;top:187.00px;font-size:5.20px;transform-origin:0 0;transform:scaleX(0.830);color:#151515;">18</div>
<div class="t g" style="left:758.50px;top:187.00px;font-size:5.20px;transform-origin:0 0;transform:scaleX(0.830);color:#151515;">19</div>
<div class="t g" style="left:767.20px;top:187.00px;font-size:5.20px;transform-origin:0 0;transform:scaleX(0.830);color:#151515;">20</div>
<div class="t g" style="left:776.00px;top:187.00px;font-size:5.20px;transform-origin:0 0;transform:scaleX(0.830);color:#c43838;">21</div>
<div class="t g" style="left:784.70px;top:187.00px;font-size:5.20px;transform-origin:0 0;transform:scaleX(0.830);color:#c43838;">22</div>
<div class="t g" style="left:722.17px;top:196.00px;font-size:5.10px;transform-origin:0 0;transform:scaleX(0.820);color:#2a2a2a;">26</div>
<div class="t g" style="left:732.20px;top:196.00px;font-size:5.20px;transform-origin:0 0;transform:scaleX(0.830);color:#151515;">23</div>
<div class="t g" style="left:740.90px;top:196.00px;font-size:5.20px;transform-origin:0 0;transform:scaleX(0.830);color:#151515;">24</div>
<div class="t g" style="left:749.70px;top:196.00px;font-size:5.20px;transform-origin:0 0;transform:scaleX(0.830);color:#151515;">25</div>
<div class="t g" style="left:758.50px;top:196.00px;font-size:5.20px;transform-origin:0 0;transform:scaleX(0.830);color:#151515;">26</div>
<div class="t g" style="left:767.20px;top:196.00px;font-size:5.20px;transform-origin:0 0;transform:scaleX(0.830);color:#151515;">27</div>
<div class="t g" style="left:776.00px;top:196.00px;font-size:5.20px;transform-origin:0 0;transform:scaleX(0.830);color:#c43838;">28</div>
<div class="t g" style="left:784.70px;top:196.00px;font-size:5.20px;transform-origin:0 0;transform:scaleX(0.830);color:#c43838;">29</div>
<div class="t g" style="left:722.17px;top:204.00px;font-size:5.10px;transform-origin:0 0;transform:scaleX(0.820);color:#2a2a2a;">27</div>
<div class="t g" style="left:732.20px;top:204.00px;font-size:5.20px;transform-origin:0 0;transform:scaleX(0.830);color:#151515;">30</div>
<div class="t" style="left:753.48px;top:212.00px;font-size:5.30px;transform-origin:0 0;transform:scaleX(0.870);color:#111;">Jul 2014</div>
<div class="t" style="left:729.45px;top:218.00px;font-size:4.90px;transform-origin:0 0;transform:scaleX(0.860);color:#222;">Mo</div>
<div class="t" style="left:740.02px;top:218.00px;font-size:4.90px;transform-origin:0 0;transform:scaleX(0.860);color:#222;">Di</div>
<div class="t" style="left:748.35px;top:218.00px;font-size:4.90px;transform-origin:0 0;transform:scaleX(0.860);color:#222;">Mi</div>
<div class="t" style="left:756.21px;top:218.00px;font-size:4.90px;transform-origin:0 0;transform:scaleX(0.860);color:#222;">Do</div>
<div class="t" style="left:766.32px;top:218.00px;font-size:4.90px;transform-origin:0 0;transform:scaleX(0.860);color:#222;">Fr</div>
<div class="t" style="left:773.95px;top:218.00px;font-size:4.90px;transform-origin:0 0;transform:scaleX(0.860);color:#222;">Sa</div>
<div class="t" style="left:782.65px;top:218.00px;font-size:4.90px;transform-origin:0 0;transform:scaleX(0.860);color:#222;">So</div>
<div class="t g" style="left:722.17px;top:227.00px;font-size:5.10px;transform-origin:0 0;transform:scaleX(0.820);color:#2a2a2a;">27</div>
<div class="t g" style="left:742.10px;top:227.00px;font-size:5.20px;transform-origin:0 0;transform:scaleX(0.830);color:#151515;">1</div>
<div class="t g" style="left:750.90px;top:227.00px;font-size:5.20px;transform-origin:0 0;transform:scaleX(0.830);color:#151515;">2</div>
<div class="t g" style="left:759.70px;top:227.00px;font-size:5.20px;transform-origin:0 0;transform:scaleX(0.830);color:#151515;">3</div>
<div class="t g" style="left:768.40px;top:227.00px;font-size:5.20px;transform-origin:0 0;transform:scaleX(0.830);color:#151515;">4</div>
<div class="t g" style="left:777.20px;top:227.00px;font-size:5.20px;transform-origin:0 0;transform:scaleX(0.830);color:#c43838;">5</div>
<div class="t g" style="left:785.90px;top:227.00px;font-size:5.20px;transform-origin:0 0;transform:scaleX(0.830);color:#c43838;">6</div>
<div class="t g" style="left:722.17px;top:236.00px;font-size:5.10px;transform-origin:0 0;transform:scaleX(0.820);color:#2a2a2a;">28</div>
<div class="t g" style="left:733.40px;top:236.00px;font-size:5.20px;transform-origin:0 0;transform:scaleX(0.830);color:#151515;">7</div>
<div class="t g" style="left:742.10px;top:236.00px;font-size:5.20px;transform-origin:0 0;transform:scaleX(0.830);color:#151515;">8</div>
<div class="t g" style="left:750.90px;top:236.00px;font-size:5.20px;transform-origin:0 0;transform:scaleX(0.830);color:#151515;">9</div>
<div class="t g" style="left:758.50px;top:236.00px;font-size:5.20px;transform-origin:0 0;transform:scaleX(0.830);color:#151515;">10</div>
<div class="t g" style="left:767.36px;top:236.00px;font-size:5.20px;transform-origin:0 0;transform:scaleX(0.830);color:#151515;">11</div>
<div class="t g" style="left:776.00px;top:236.00px;font-size:5.20px;transform-origin:0 0;transform:scaleX(0.830);color:#c43838;">12</div>
<div class="t g" style="left:784.70px;top:236.00px;font-size:5.20px;transform-origin:0 0;transform:scaleX(0.830);color:#c43838;">13</div>
<div class="t g" style="left:722.17px;top:245.00px;font-size:5.10px;transform-origin:0 0;transform:scaleX(0.820);color:#2a2a2a;">29</div>
<div class="t g" style="left:732.20px;top:245.00px;font-size:5.20px;transform-origin:0 0;transform:scaleX(0.830);color:#151515;">14</div>
<div class="t g" style="left:740.90px;top:245.00px;font-size:5.20px;transform-origin:0 0;transform:scaleX(0.830);color:#151515;">15</div>
<div class="t g" style="left:749.70px;top:245.00px;font-size:5.20px;transform-origin:0 0;transform:scaleX(0.830);color:#151515;">16</div>
<div class="t g" style="left:758.50px;top:245.00px;font-size:5.20px;transform-origin:0 0;transform:scaleX(0.830);color:#151515;">17</div>
<div class="t g" style="left:767.20px;top:245.00px;font-size:5.20px;transform-origin:0 0;transform:scaleX(0.830);color:#151515;">18</div>
<div class="t g" style="left:776.00px;top:245.00px;font-size:5.20px;transform-origin:0 0;transform:scaleX(0.830);color:#c43838;">19</div>
<div class="t g" style="left:784.70px;top:245.00px;font-size:5.20px;transform-origin:0 0;transform:scaleX(0.830);color:#c43838;">20</div>
<div class="t g" style="left:722.17px;top:254.00px;font-size:5.10px;transform-origin:0 0;transform:scaleX(0.820);color:#2a2a2a;">30</div>
<div class="t g" style="left:732.20px;top:254.00px;font-size:5.20px;transform-origin:0 0;transform:scaleX(0.830);color:#151515;">21</div>
<div class="t g" style="left:740.90px;top:254.00px;font-size:5.20px;transform-origin:0 0;transform:scaleX(0.830);color:#151515;">22</div>
<div class="t g" style="left:749.70px;top:254.00px;font-size:5.20px;transform-origin:0 0;transform:scaleX(0.830);color:#151515;">23</div>
<div class="t g" style="left:758.50px;top:254.00px;font-size:5.20px;transform-origin:0 0;transform:scaleX(0.830);color:#151515;">24</div>
<div class="t g" style="left:767.20px;top:254.00px;font-size:5.20px;transform-origin:0 0;transform:scaleX(0.830);color:#151515;">25</div>
<div class="t g" style="left:776.00px;top:254.00px;font-size:5.20px;transform-origin:0 0;transform:scaleX(0.830);color:#c43838;">26</div>
<div class="t g" style="left:784.70px;top:254.00px;font-size:5.20px;transform-origin:0 0;transform:scaleX(0.830);color:#c43838;">27</div>
<div class="t g" style="left:722.17px;top:262.00px;font-size:5.10px;transform-origin:0 0;transform:scaleX(0.820);color:#2a2a2a;">31</div>
<div class="t g" style="left:732.20px;top:262.00px;font-size:5.20px;transform-origin:0 0;transform:scaleX(0.830);color:#151515;">28</div>
<div class="t g" style="left:740.90px;top:262.00px;font-size:5.20px;transform-origin:0 0;transform:scaleX(0.830);color:#151515;">29</div>
<div class="t g" style="left:749.70px;top:262.00px;font-size:5.20px;transform-origin:0 0;transform:scaleX(0.830);color:#151515;">30</div>
<div class="t g" style="left:758.50px;top:262.00px;font-size:5.20px;transform-origin:0 0;transform:scaleX(0.830);color:#151515;">31</div>
<div class="t g" style="left:722.17px;top:271.00px;font-size:5.10px;transform-origin:0 0;transform:scaleX(0.820);color:#2a2a2a;">32</div>
<div class="t" style="left:752.33px;top:279.00px;font-size:5.30px;transform-origin:0 0;transform:scaleX(0.870);color:#111;">Aug 2014</div>
<div class="t" style="left:729.45px;top:285.00px;font-size:4.90px;transform-origin:0 0;transform:scaleX(0.860);color:#222;">Mo</div>
<div class="t" style="left:740.02px;top:285.00px;font-size:4.90px;transform-origin:0 0;transform:scaleX(0.860);color:#222;">Di</div>
<div class="t" style="left:748.35px;top:285.00px;font-size:4.90px;transform-origin:0 0;transform:scaleX(0.860);color:#222;">Mi</div>
<div class="t" style="left:756.21px;top:285.00px;font-size:4.90px;transform-origin:0 0;transform:scaleX(0.860);color:#222;">Do</div>
<div class="t" style="left:766.32px;top:285.00px;font-size:4.90px;transform-origin:0 0;transform:scaleX(0.860);color:#222;">Fr</div>
<div class="t" style="left:773.95px;top:285.00px;font-size:4.90px;transform-origin:0 0;transform:scaleX(0.860);color:#222;">Sa</div>
<div class="t" style="left:782.65px;top:285.00px;font-size:4.90px;transform-origin:0 0;transform:scaleX(0.860);color:#222;">So</div>
<div class="t g" style="left:722.17px;top:294.00px;font-size:5.10px;transform-origin:0 0;transform:scaleX(0.820);color:#2a2a2a;">31</div>
<div class="t g" style="left:768.40px;top:294.00px;font-size:5.20px;transform-origin:0 0;transform:scaleX(0.830);color:#151515;">1</div>
<div class="t g" style="left:777.20px;top:294.00px;font-size:5.20px;transform-origin:0 0;transform:scaleX(0.830);color:#c43838;">2</div>
<div class="t g" style="left:785.90px;top:294.00px;font-size:5.20px;transform-origin:0 0;transform:scaleX(0.830);color:#c43838;">3</div>
<div class="t g" style="left:722.17px;top:303.00px;font-size:5.10px;transform-origin:0 0;transform:scaleX(0.820);color:#2a2a2a;">32</div>
<div class="t g" style="left:733.40px;top:303.00px;font-size:5.20px;transform-origin:0 0;transform:scaleX(0.830);color:#151515;">4</div>
<div class="t g" style="left:742.10px;top:303.00px;font-size:5.20px;transform-origin:0 0;transform:scaleX(0.830);color:#151515;">5</div>
<div class="t g" style="left:750.90px;top:303.00px;font-size:5.20px;transform-origin:0 0;transform:scaleX(0.830);color:#151515;">6</div>
<div class="t g" style="left:759.70px;top:303.00px;font-size:5.20px;transform-origin:0 0;transform:scaleX(0.830);color:#151515;">7</div>
<div class="t g" style="left:768.40px;top:303.00px;font-size:5.20px;transform-origin:0 0;transform:scaleX(0.830);color:#151515;">8</div>
<div class="t g" style="left:777.20px;top:303.00px;font-size:5.20px;transform-origin:0 0;transform:scaleX(0.830);color:#c43838;">9</div>
<div class="t g" style="left:784.70px;top:303.00px;font-size:5.20px;transform-origin:0 0;transform:scaleX(0.830);color:#c43838;">10</div>
<div class="t g" style="left:722.17px;top:312.00px;font-size:5.10px;transform-origin:0 0;transform:scaleX(0.820);color:#2a2a2a;">33</div>
<div class="t g" style="left:732.36px;top:312.00px;font-size:5.20px;transform-origin:0 0;transform:scaleX(0.830);color:#151515;">11</div>
<div class="t g" style="left:740.90px;top:312.00px;font-size:5.20px;transform-origin:0 0;transform:scaleX(0.830);color:#151515;">12</div>
<div class="t g" style="left:749.70px;top:312.00px;font-size:5.20px;transform-origin:0 0;transform:scaleX(0.830);color:#151515;">13</div>
<div class="t g" style="left:758.50px;top:312.00px;font-size:5.20px;transform-origin:0 0;transform:scaleX(0.830);color:#151515;">14</div>
<div class="t g" style="left:767.20px;top:312.00px;font-size:5.20px;transform-origin:0 0;transform:scaleX(0.830);color:#151515;">15</div>
<div class="t g" style="left:776.00px;top:312.00px;font-size:5.20px;transform-origin:0 0;transform:scaleX(0.830);color:#c43838;">16</div>
<div class="t g" style="left:784.70px;top:312.00px;font-size:5.20px;transform-origin:0 0;transform:scaleX(0.830);color:#c43838;">17</div>
<div class="t g" style="left:722.17px;top:320.00px;font-size:5.10px;transform-origin:0 0;transform:scaleX(0.820);color:#2a2a2a;">34</div>
<div class="t g" style="left:732.20px;top:320.00px;font-size:5.20px;transform-origin:0 0;transform:scaleX(0.830);color:#151515;">18</div>
<div class="t g" style="left:740.90px;top:320.00px;font-size:5.20px;transform-origin:0 0;transform:scaleX(0.830);color:#151515;">19</div>
<div class="t g" style="left:749.70px;top:320.00px;font-size:5.20px;transform-origin:0 0;transform:scaleX(0.830);color:#151515;">20</div>
<div class="t g" style="left:758.50px;top:320.00px;font-size:5.20px;transform-origin:0 0;transform:scaleX(0.830);color:#151515;">21</div>
<div class="t g" style="left:767.20px;top:320.00px;font-size:5.20px;transform-origin:0 0;transform:scaleX(0.830);color:#151515;">22</div>
<div class="t g" style="left:776.00px;top:320.00px;font-size:5.20px;transform-origin:0 0;transform:scaleX(0.830);color:#c43838;">23</div>
<div class="t g" style="left:784.70px;top:320.00px;font-size:5.20px;transform-origin:0 0;transform:scaleX(0.830);color:#c43838;">24</div>
<div class="t g" style="left:722.17px;top:329.00px;font-size:5.10px;transform-origin:0 0;transform:scaleX(0.820);color:#2a2a2a;">35</div>
<div class="t g" style="left:732.20px;top:329.00px;font-size:5.20px;transform-origin:0 0;transform:scaleX(0.830);color:#151515;">25</div>
<div class="t g" style="left:740.90px;top:329.00px;font-size:5.20px;transform-origin:0 0;transform:scaleX(0.830);color:#151515;">26</div>
<div class="t g" style="left:749.70px;top:329.00px;font-size:5.20px;transform-origin:0 0;transform:scaleX(0.830);color:#151515;">27</div>
<div class="t g" style="left:758.50px;top:329.00px;font-size:5.20px;transform-origin:0 0;transform:scaleX(0.830);color:#151515;">28</div>
<div class="t g" style="left:767.20px;top:329.00px;font-size:5.20px;transform-origin:0 0;transform:scaleX(0.830);color:#151515;">29</div>
<div class="t g" style="left:776.00px;top:329.00px;font-size:5.20px;transform-origin:0 0;transform:scaleX(0.830);color:#c43838;">30</div>
<div class="t g" style="left:784.70px;top:329.00px;font-size:5.20px;transform-origin:0 0;transform:scaleX(0.830);color:#c43838;">31</div>
<div class="t g" style="left:722.17px;top:338.00px;font-size:5.10px;transform-origin:0 0;transform:scaleX(0.820);color:#2a2a2a;">36</div>
<div class="a" style="left:720px;top:348px;width:78.5px;height:12.5px;background:linear-gradient(#f4f4f4,#e4e4e4);border:1px solid #c6c6c6"></div>
<div class="a" style="left:742px;top:349.2px;width:12.6px;height:10.4px;background:linear-gradient(#3f7fe0,#0e3cae);border:0.8px solid #8db4ec"></div>
<svg class="a" style="left:744.2px;top:351px" width="8.5" height="7" viewBox="0 0 8.5 7"><path d="M7 5.8 H2.2 Q0.8 5.8 0.8 4.4 V3.8 Q0.8 2.4 2.2 2.4 H5.4" stroke="#fff" stroke-width="1.3" fill="none"/><path d="M4.8 0.3 L7.8 2.4 L4.8 4.6Z" fill="#fff"/></svg>
<div class="t" style="left:756.40px;top:351.00px;font-size:7.60px;transform-origin:0 0;transform:scaleX(1.001);color:#111;">Heute</div>
</div></body></html>
